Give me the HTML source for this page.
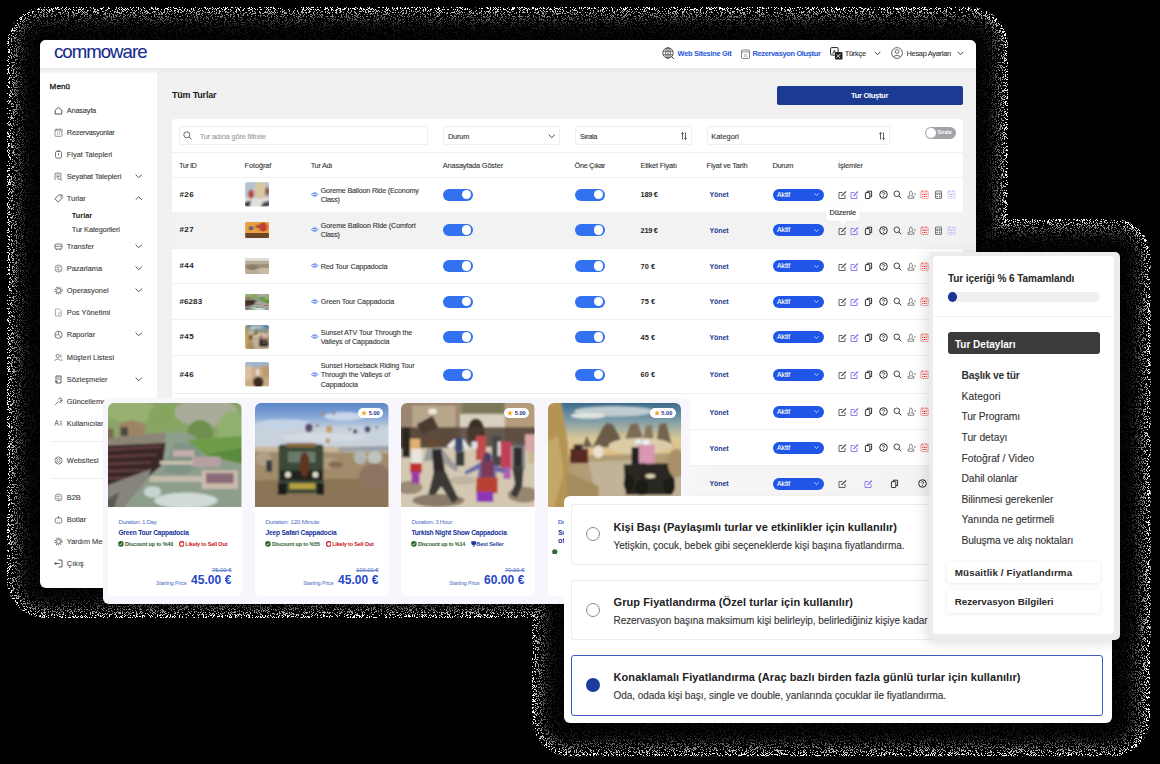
<!DOCTYPE html><html><head><meta charset="utf-8"><style>
html,body{margin:0;padding:0;}
body{width:1160px;height:764px;background:#000;position:relative;overflow:hidden;font-family:"Liberation Sans",sans-serif;}
.t{position:absolute;white-space:nowrap;}
.r{position:absolute;}
</style></head><body>
<svg class="r" style="left:0;top:0" width="1160" height="764"><defs><filter id="nz1" color-interpolation-filters="sRGB" x="0" y="0" width="1160" height="764" filterUnits="userSpaceOnUse"><feTurbulence type="fractalNoise" baseFrequency="1.37" numOctaves="2" seed="4" result="t"/><feColorMatrix in="t" type="matrix" values="0 0 0 0 1  0 0 0 0 1  0 0 0 0 1  60 0 0 0 -33.6" result="m"/><feComposite in="SourceGraphic" in2="m" operator="in"/></filter></defs><g filter="url(#nz1)"><g fill="rgb(255,255,255)"><rect x="7" y="7" width="1001" height="611" rx="38"/><rect x="896.6" y="219" width="254" height="452.5" rx="37"/><rect x="532" y="464.3" width="618" height="292" rx="38"/></g><g fill="rgb(186,186,186)"><rect x="10.3" y="10.3" width="994.5" height="604.7" rx="34.8"/><rect x="899.8" y="222.3" width="247.7" height="446" rx="33.8"/><rect x="535.2" y="467.5" width="611" height="285.5" rx="34.8"/></g><g fill="rgb(131,131,131)"><rect x="13.6" y="13.6" width="988" height="598.4" rx="31.6"/><rect x="903" y="225.6" width="241.4" height="439.5" rx="30.6"/><rect x="538.4" y="470.7" width="604" height="279" rx="31.6"/></g><g fill="rgb(90,90,90)"><rect x="16.9" y="16.9" width="981.5" height="592.1" rx="28.4"/><rect x="906.2" y="228.9" width="235.1" height="433" rx="27.4"/><rect x="541.6" y="473.9" width="597" height="272.5" rx="28.4"/></g><g fill="rgb(60,60,60)"><rect x="20.2" y="20.2" width="975" height="585.8" rx="25.2"/><rect x="909.4" y="232.2" width="228.8" height="426.5" rx="24.2"/><rect x="544.8" y="477.1" width="590" height="266" rx="25.2"/></g><g fill="rgb(39,39,39)"><rect x="23.5" y="23.5" width="968.5" height="579.5" rx="22"/><rect x="912.6" y="235.5" width="222.5" height="420" rx="21"/><rect x="548" y="480.3" width="583" height="259.5" rx="22"/></g><g fill="rgb(26,26,26)"><rect x="26.8" y="26.8" width="962" height="573.2" rx="18.8"/><rect x="915.8" y="238.8" width="216.2" height="413.5" rx="17.8"/><rect x="551.2" y="483.5" width="576" height="253" rx="18.8"/></g><g fill="rgb(18,18,18)"><rect x="30.1" y="30.1" width="955.5" height="566.9" rx="15.6"/><rect x="919" y="242.1" width="209.9" height="407" rx="14.6"/><rect x="554.4" y="486.7" width="569" height="246.5" rx="15.6"/></g><g fill="rgb(14,14,14)"><rect x="33.4" y="33.4" width="949" height="560.6" rx="12.4"/><rect x="922.2" y="245.4" width="203.6" height="400.5" rx="11.4"/><rect x="557.6" y="489.9" width="562" height="240" rx="12.4"/></g><g fill="rgb(13,13,13)"><rect x="36.7" y="36.7" width="942.5" height="554.3" rx="9.2"/><rect x="925.4" y="248.7" width="197.3" height="394" rx="8.2"/><rect x="560.8" y="493.1" width="555" height="233.5" rx="9.2"/></g></g></svg><div class="r" style="left:40.00px;top:40.00px;width:936.00px;height:548.00px;background:#fff;border-radius:6px;"></div><div class="r" style="left:40.00px;top:40.00px;width:936.00px;height:28.00px;background:#fff;border-radius:6px 6px 0 0;"></div><div class="r" style="left:157.00px;top:68.00px;width:819.00px;height:520.00px;background:#f1f1f1;"></div><div class="r" style="left:40.00px;top:68.00px;width:936.00px;height:6.00px;background:linear-gradient(#e9e9e9,rgba(241,241,241,0));"></div><div class="r" style="left:40.00px;top:68.00px;width:117.00px;height:6.00px;background:linear-gradient(#ededed,rgba(255,255,255,0));"></div><div id="t0" class="t" style="left:54.00px;top:39.81px;font-size:18.60px;line-height:24.18px;font-weight:400;color:#172b8c;letter-spacing:-0.971px;-webkit-text-stroke:0.10px #172b8c;">commoware</div><div id="t1" class="t" style="left:677.60px;top:49.21px;font-size:7.40px;line-height:9.62px;font-weight:700;color:#2557d6;letter-spacing:-0.266px;">Web Sitesine Git</div><div id="t2" class="t" style="left:752.50px;top:49.21px;font-size:7.40px;line-height:9.62px;font-weight:700;color:#2557d6;letter-spacing:-0.313px;">Rezervasyon Oluştur</div><div id="t3" class="t" style="left:844.80px;top:49.21px;font-size:7.40px;line-height:9.62px;font-weight:400;color:#333;letter-spacing:-0.279px;-webkit-text-stroke:0.10px #333;">Türkçe</div><div id="t4" class="t" style="left:906.50px;top:49.21px;font-size:7.40px;line-height:9.62px;font-weight:400;color:#333;letter-spacing:-0.280px;-webkit-text-stroke:0.10px #333;">Hesap Ayarları</div><svg class="r" style="left:662.00px;top:47.00px;" width="13" height="13" viewBox="0 0 13 13"><circle cx="6" cy="6" r="5.2" fill="none" stroke="#444" stroke-width="0.9"/><ellipse cx="6" cy="6" rx="2.3" ry="5.2" fill="none" stroke="#444" stroke-width="0.8"/><path d="M1 4.2H11M1 7.8H11M6 .8V11.2" stroke="#444" stroke-width="0.8"/><path d="M9 9L12 12" stroke="#444" stroke-width="1"/></svg><svg class="r" style="left:741.00px;top:49.00px;" width="9" height="10" viewBox="0 0 9 10"><rect x="0.5" y="1" width="8" height="8.5" rx="0.8" fill="none" stroke="#666" stroke-width="0.8"/><path d="M0.5 3H8.5" stroke="#666" stroke-width="0.7"/><text x="4.5" y="8" font-size="3.5" text-anchor="middle" fill="#666" font-family="Liberation Sans">15</text></svg><svg class="r" style="left:830.00px;top:47.00px;" width="13" height="13" viewBox="0 0 13 13"><rect x="0.6" y="0.6" width="7.5" height="7.5" rx="1" fill="#fff" stroke="#222" stroke-width="1"/><text x="4.3" y="6.5" font-size="5.5" font-weight="700" text-anchor="middle" fill="#222" font-family="Liberation Sans">A</text><rect x="5" y="5" width="7.5" height="7.5" rx="1" fill="#222"/><path d="M6.5 10.5L10.5 7M7 7.5L10 11" stroke="#fff" stroke-width="0.8"/></svg><svg class="r" style="left:874.00px;top:51.00px;" width="7" height="5" viewBox="0 0 7 5"><path d="M0.7 0.8L3.5 3.8L6.3 0.8" fill="none" stroke="#333" stroke-width="0.9"/></svg><svg class="r" style="left:891.00px;top:47.00px;" width="12" height="12" viewBox="0 0 12 12"><circle cx="6" cy="6" r="5.4" fill="none" stroke="#444" stroke-width="0.8"/><circle cx="6" cy="4.6" r="1.9" fill="none" stroke="#444" stroke-width="0.8"/><path d="M2.5 10C3.5 8 8.5 8 9.5 10" fill="none" stroke="#444" stroke-width="0.8"/></svg><svg class="r" style="left:957.00px;top:50.50px;" width="7" height="5" viewBox="0 0 7 5"><path d="M0.7 0.8L3.5 3.8L6.3 0.8" fill="none" stroke="#333" stroke-width="0.9"/></svg><div id="t5" class="t" style="left:49.60px;top:81.76px;font-size:8.00px;line-height:10.40px;font-weight:400;color:#1b1b1b;letter-spacing:0.128px;-webkit-text-stroke:0.10px #1b1b1b;-webkit-text-stroke:0.3px #1b1b1b;">Menü</div><div id="t6" class="t" style="left:66.80px;top:105.81px;font-size:7.40px;line-height:9.62px;font-weight:400;color:#3a3a3a;letter-spacing:-0.218px;-webkit-text-stroke:0.10px #3a3a3a;">Anasayfa</div><svg class="r" style="left:53.60px;top:105.60px;" width="9" height="9" viewBox="0 0 9 9"><path d="M1.2 4.3L4.5 1.2L7.8 4.3V8H1.2Z" fill="none" stroke="#333" stroke-width="0.85" stroke-linejoin="round"/></svg><div id="t7" class="t" style="left:66.80px;top:127.81px;font-size:7.40px;line-height:9.62px;font-weight:400;color:#3a3a3a;letter-spacing:-0.258px;-webkit-text-stroke:0.10px #3a3a3a;">Rezervasyonlar</div><svg class="r" style="left:53.60px;top:127.60px;" width="9" height="9" viewBox="0 0 9 9"><rect x="1" y="1.3" width="7" height="7" rx="0.6" fill="none" stroke="#666" stroke-width="0.7"/><path d="M1 2.8H8M2.8 0.6V1.8M6.2 0.6V1.8" stroke="#666" stroke-width="0.6"/><path d="M3.5 4.4V7M5 4.4H5.9L5 7" fill="none" stroke="#666" stroke-width="0.45"/></svg><div id="t8" class="t" style="left:66.80px;top:149.81px;font-size:7.40px;line-height:9.62px;font-weight:400;color:#3a3a3a;-webkit-text-stroke:0.10px #3a3a3a;">Fiyat Talepleri</div><svg class="r" style="left:53.60px;top:149.60px;" width="9" height="9" viewBox="0 0 9 9"><rect x="1.5" y="1.5" width="6" height="6.5" rx="1.2" fill="none" stroke="#555" stroke-width="0.8"/><path d="M4.5 3V5.2" stroke="#555" stroke-width="0.8"/><path d="M3 1.5V0.8H6V1.5" fill="none" stroke="#555" stroke-width="0.6"/></svg><div id="t9" class="t" style="left:66.80px;top:171.71px;font-size:7.40px;line-height:9.62px;font-weight:400;color:#3a3a3a;letter-spacing:-0.129px;-webkit-text-stroke:0.10px #3a3a3a;">Seyahat Talepleri</div><svg class="r" style="left:53.60px;top:171.50px;" width="9" height="9" viewBox="0 0 9 9"><path d="M1 8V1.5L4 0.8L7 1.5V4" fill="none" stroke="#555" stroke-width="0.7"/><path d="M2.3 3H5.5M2.3 4.6H4" stroke="#555" stroke-width="0.6"/><circle cx="5.3" cy="5.8" r="1.7" fill="none" stroke="#555" stroke-width="0.7"/><path d="M6.5 7L8.3 8.6" stroke="#555" stroke-width="0.8"/></svg><svg class="r" style="left:135.30px;top:173.80px;" width="7.5" height="4.5" viewBox="0 0 7.5 4.5"><path d="M0.6 0.6L3.75 3.7L6.9 0.6" fill="none" stroke="#444" stroke-width="0.9"/></svg><div id="t10" class="t" style="left:66.80px;top:193.71px;font-size:7.40px;line-height:9.62px;font-weight:400;color:#3a3a3a;-webkit-text-stroke:0.10px #3a3a3a;">Turlar</div><svg class="r" style="left:53.60px;top:193.50px;" width="9" height="9" viewBox="0 0 9 9"><path d="M4.8 0.9H8.1V4.2L4.2 8.1L0.9 4.8Z" fill="none" stroke="#444" stroke-width="0.8" stroke-linejoin="round"/><circle cx="6.3" cy="2.7" r="0.55" fill="#444"/></svg><svg class="r" style="left:135.30px;top:195.80px;" width="7.5" height="4.5" viewBox="0 0 7.5 4.5"><path d="M0.6 3.9L3.75 0.8L6.9 3.9" fill="none" stroke="#444" stroke-width="0.9"/></svg><div id="t11" class="t" style="left:66.80px;top:241.91px;font-size:7.40px;line-height:9.62px;font-weight:400;color:#3a3a3a;-webkit-text-stroke:0.10px #3a3a3a;">Transfer</div><svg class="r" style="left:53.60px;top:241.70px;" width="9" height="9" viewBox="0 0 9 9"><rect x="1" y="2" width="7" height="5" rx="1" fill="none" stroke="#555" stroke-width="0.8"/><path d="M1 4.3H8M2.5 7V8.2M6.5 7V8.2" stroke="#555" stroke-width="0.7"/></svg><svg class="r" style="left:135.30px;top:244.00px;" width="7.5" height="4.5" viewBox="0 0 7.5 4.5"><path d="M0.6 0.6L3.75 3.7L6.9 0.6" fill="none" stroke="#444" stroke-width="0.9"/></svg><div id="t12" class="t" style="left:66.80px;top:263.91px;font-size:7.40px;line-height:9.62px;font-weight:400;color:#3a3a3a;-webkit-text-stroke:0.10px #3a3a3a;">Pazarlama</div><svg class="r" style="left:53.60px;top:263.70px;" width="9" height="9" viewBox="0 0 9 9"><circle cx="4.5" cy="4.5" r="3.6" fill="none" stroke="#777" stroke-width="0.7"/><path d="M1.3 3.2C3 4.3 6 2.2 7.8 3.5M1.5 6C3.5 4.8 5.5 7 7.6 5.8M4 1C2.8 3 5.5 5.5 4.3 8" fill="none" stroke="#777" stroke-width="0.55"/></svg><svg class="r" style="left:135.30px;top:266.00px;" width="7.5" height="4.5" viewBox="0 0 7.5 4.5"><path d="M0.6 0.6L3.75 3.7L6.9 0.6" fill="none" stroke="#444" stroke-width="0.9"/></svg><div id="t13" class="t" style="left:66.80px;top:286.31px;font-size:7.40px;line-height:9.62px;font-weight:400;color:#3a3a3a;-webkit-text-stroke:0.10px #3a3a3a;">Operasyonel</div><svg class="r" style="left:53.60px;top:286.10px;" width="9" height="9" viewBox="0 0 9 9"><circle cx="4.5" cy="4.5" r="2.1" fill="none" stroke="#555" stroke-width="0.8"/><circle cx="4.5" cy="4.5" r="3.4" fill="none" stroke="#555" stroke-width="1.1" stroke-dasharray="1.1 1.1"/></svg><svg class="r" style="left:135.30px;top:288.40px;" width="7.5" height="4.5" viewBox="0 0 7.5 4.5"><path d="M0.6 0.6L3.75 3.7L6.9 0.6" fill="none" stroke="#444" stroke-width="0.9"/></svg><div id="t14" class="t" style="left:66.80px;top:308.31px;font-size:7.40px;line-height:9.62px;font-weight:400;color:#3a3a3a;-webkit-text-stroke:0.10px #3a3a3a;">Pos Yönetimi</div><svg class="r" style="left:53.60px;top:308.10px;" width="9" height="9" viewBox="0 0 9 9"><path d="M1.5 1H5.5L7 2.5V8H1.5Z" fill="none" stroke="#888" stroke-width="0.7"/><circle cx="6" cy="6.5" r="1.6" fill="#fff" stroke="#888" stroke-width="0.6"/></svg><div id="t15" class="t" style="left:66.80px;top:330.31px;font-size:7.40px;line-height:9.62px;font-weight:400;color:#3a3a3a;-webkit-text-stroke:0.10px #3a3a3a;">Raporlar</div><svg class="r" style="left:53.60px;top:330.10px;" width="9" height="9" viewBox="0 0 9 9"><circle cx="4.5" cy="4.8" r="3.6" fill="none" stroke="#555" stroke-width="0.75"/><path d="M4.5 1.2V4.8L7 7.2M4.5 4.8H1" fill="none" stroke="#555" stroke-width="0.65"/></svg><svg class="r" style="left:135.30px;top:332.40px;" width="7.5" height="4.5" viewBox="0 0 7.5 4.5"><path d="M0.6 0.6L3.75 3.7L6.9 0.6" fill="none" stroke="#444" stroke-width="0.9"/></svg><div id="t16" class="t" style="left:66.80px;top:352.71px;font-size:7.40px;line-height:9.62px;font-weight:400;color:#3a3a3a;-webkit-text-stroke:0.10px #3a3a3a;">Müşteri Listesi</div><svg class="r" style="left:53.60px;top:352.50px;" width="9" height="9" viewBox="0 0 9 9"><circle cx="3.6" cy="3" r="1.6" fill="none" stroke="#555" stroke-width="0.7"/><path d="M0.8 8C0.8 5.6 6.4 5.6 6.4 8" fill="none" stroke="#555" stroke-width="0.7"/><path d="M5.8 1.5C7.5 1.7 7.5 4.2 5.9 4.4M7 5.8C8 6.3 8.3 7 8.3 8" fill="none" stroke="#555" stroke-width="0.6"/></svg><div id="t17" class="t" style="left:66.80px;top:374.71px;font-size:7.40px;line-height:9.62px;font-weight:400;color:#3a3a3a;-webkit-text-stroke:0.10px #3a3a3a;">Sözleşmeler</div><svg class="r" style="left:53.60px;top:374.50px;" width="9" height="9" viewBox="0 0 9 9"><path d="M2 1H7V8H2Z" fill="none" stroke="#444" stroke-width="0.85"/><path d="M3.2 2.8H5.8M3.2 4.4H5.8M1 6.5H4" stroke="#444" stroke-width="0.6"/></svg><svg class="r" style="left:135.30px;top:376.80px;" width="7.5" height="4.5" viewBox="0 0 7.5 4.5"><path d="M0.6 0.6L3.75 3.7L6.9 0.6" fill="none" stroke="#444" stroke-width="0.9"/></svg><div id="t18" class="t" style="left:66.80px;top:396.71px;font-size:7.40px;line-height:9.62px;font-weight:400;color:#3a3a3a;-webkit-text-stroke:0.10px #3a3a3a;">Güncellemeler</div><svg class="r" style="left:53.60px;top:396.50px;" width="9" height="9" viewBox="0 0 9 9"><path d="M1.2 7.8L4.4 4.6M4.2 2.5C4.7 1 6.8 0.6 7.8 1.9L6.4 3.1L6.9 4L8.1 3.3C8.1 5 6.3 5.8 5 5.1" fill="none" stroke="#555" stroke-width="0.8"/></svg><div id="t19" class="t" style="left:66.80px;top:418.61px;font-size:7.40px;line-height:9.62px;font-weight:400;color:#3a3a3a;-webkit-text-stroke:0.10px #3a3a3a;">Kullanıcılar</div><svg class="r" style="left:53.60px;top:418.40px;" width="9" height="9" viewBox="0 0 9 9"><path d="M0.8 7.5L2.6 2L4.4 7.5M1.5 5.6H3.7" fill="none" stroke="#555" stroke-width="0.7"/><path d="M5.5 3.5H8.3M5.5 5.2H8.3M5.5 6.9H8.3" stroke="#555" stroke-width="0.6"/></svg><div id="t20" class="t" style="left:66.80px;top:455.91px;font-size:7.40px;line-height:9.62px;font-weight:400;color:#3a3a3a;-webkit-text-stroke:0.10px #3a3a3a;">Websitesi</div><svg class="r" style="left:53.60px;top:455.70px;" width="9" height="9" viewBox="0 0 9 9"><circle cx="4.5" cy="4.5" r="3.6" fill="none" stroke="#666" stroke-width="0.75"/><circle cx="4.5" cy="4.5" r="1.6" fill="none" stroke="#666" stroke-width="0.7"/><path d="M2 2L3.3 3.3M7 2L5.7 3.3M2 7L3.3 5.7M7 7L5.7 5.7" stroke="#666" stroke-width="0.6"/></svg><div id="t21" class="t" style="left:66.80px;top:493.21px;font-size:7.40px;line-height:9.62px;font-weight:400;color:#3a3a3a;-webkit-text-stroke:0.10px #3a3a3a;">B2B</div><svg class="r" style="left:53.60px;top:493.00px;" width="9" height="9" viewBox="0 0 9 9"><circle cx="4.5" cy="4.5" r="3.6" fill="none" stroke="#777" stroke-width="0.7"/><path d="M1.3 3.2C3 4.3 6 2.2 7.8 3.5M1.5 6C3.5 4.8 5.5 7 7.6 5.8M4 1C2.8 3 5.5 5.5 4.3 8" fill="none" stroke="#777" stroke-width="0.55"/></svg><div id="t22" class="t" style="left:66.80px;top:515.21px;font-size:7.40px;line-height:9.62px;font-weight:400;color:#3a3a3a;-webkit-text-stroke:0.10px #3a3a3a;">Botlar</div><svg class="r" style="left:53.60px;top:515.00px;" width="9" height="9" viewBox="0 0 9 9"><rect x="1.2" y="3" width="6.6" height="5" rx="1.5" fill="none" stroke="#555" stroke-width="0.75"/><path d="M4.5 1V3M3 5.3H3.3M5.7 5.3H6" stroke="#555" stroke-width="0.8"/></svg><div id="t23" class="t" style="left:66.80px;top:537.21px;font-size:7.40px;line-height:9.62px;font-weight:400;color:#3a3a3a;-webkit-text-stroke:0.10px #3a3a3a;">Yardım Merkezi</div><svg class="r" style="left:53.60px;top:537.00px;" width="9" height="9" viewBox="0 0 9 9"><circle cx="4.5" cy="4.5" r="2.1" fill="none" stroke="#555" stroke-width="0.8"/><circle cx="4.5" cy="4.5" r="3.4" fill="none" stroke="#555" stroke-width="1.1" stroke-dasharray="1.1 1.1"/></svg><div id="t24" class="t" style="left:66.80px;top:559.11px;font-size:7.40px;line-height:9.62px;font-weight:400;color:#3a3a3a;-webkit-text-stroke:0.10px #3a3a3a;">Çıkış</div><svg class="r" style="left:53.60px;top:558.90px;" width="9" height="9" viewBox="0 0 9 9"><path d="M4.5 1H8V8H4.5" fill="none" stroke="#333" stroke-width="0.8"/><path d="M0.8 4.5H5.8M2.4 2.9L0.8 4.5L2.4 6.1" fill="none" stroke="#333" stroke-width="0.8"/></svg><div id="t25" class="t" style="left:71.80px;top:210.71px;font-size:7.40px;line-height:9.62px;font-weight:700;color:#222;">Turlar</div><div id="t26" class="t" style="left:71.80px;top:224.71px;font-size:7.40px;line-height:9.62px;font-weight:400;color:#3a3a3a;letter-spacing:-0.137px;-webkit-text-stroke:0.10px #3a3a3a;">Tur Kategorileri</div><div class="r" style="left:50.00px;top:440.50px;width:100.00px;height:1.00px;background:#eee;"></div><div class="r" style="left:50.00px;top:477.90px;width:100.00px;height:1.00px;background:#eee;"></div><div id="t27" class="t" style="left:172.00px;top:89.78px;font-size:9.00px;line-height:11.70px;font-weight:700;color:#1a1a1a;letter-spacing:-0.205px;">Tüm Turlar</div><div class="r" style="left:776.60px;top:85.50px;width:186.50px;height:19.00px;background:#1b3b93;border-radius:2px;"></div><div id="t28" class="t" style="left:851.00px;top:91.15px;font-size:7.50px;line-height:9.75px;font-weight:700;color:#fff;letter-spacing:-0.298px;">Tur Oluştur</div><div class="r" style="left:172.00px;top:119.00px;width:791.00px;height:470.00px;background:#fff;border-radius:3px 3px 0 0;"></div><div class="r" style="left:179.40px;top:126.30px;width:249.00px;height:18.50px;border:1px solid #eeeeee;border-radius:2px;box-sizing:border-box;"></div><svg class="r" style="left:183.30px;top:131.00px;" width="9" height="9" viewBox="0 0 9 9"><circle cx="3.8" cy="3.8" r="3" fill="none" stroke="#555" stroke-width="0.9"/><path d="M6 6L8.5 8.5" stroke="#555" stroke-width="0.9"/></svg><div id="t29" class="t" style="left:199.70px;top:131.61px;font-size:7.40px;line-height:9.62px;font-weight:400;color:#9a9a9a;letter-spacing:-0.158px;-webkit-text-stroke:0.10px #9a9a9a;">Tur adına göre filtrele</div><div class="r" style="left:442.80px;top:126.30px;width:117.50px;height:18.50px;border:1px solid #eeeeee;border-radius:2px;box-sizing:border-box;"></div><div id="t30" class="t" style="left:448.00px;top:131.61px;font-size:7.40px;line-height:9.62px;font-weight:400;color:#333;letter-spacing:-0.222px;-webkit-text-stroke:0.10px #333;">Durum</div><svg class="r" style="left:548.00px;top:133.50px;" width="7.5" height="4.5" viewBox="0 0 7.5 4.5"><path d="M0.6 0.6L3.75 3.7L6.9 0.6" fill="none" stroke="#333" stroke-width="0.9"/></svg><div class="r" style="left:574.50px;top:126.30px;width:117.00px;height:18.80px;border:1px solid #eeeeee;border-radius:2px;box-sizing:border-box;"></div><div id="t31" class="t" style="left:579.90px;top:131.71px;font-size:7.40px;line-height:9.62px;font-weight:400;color:#333;letter-spacing:-0.383px;-webkit-text-stroke:0.10px #333;">Sırala</div><div class="r" style="left:706.60px;top:126.30px;width:183.00px;height:18.80px;border:1px solid #eeeeee;border-radius:2px;box-sizing:border-box;"></div><div id="t32" class="t" style="left:711.30px;top:131.71px;font-size:7.40px;line-height:9.62px;font-weight:400;color:#333;letter-spacing:0.010px;-webkit-text-stroke:0.10px #333;">Kategori</div><svg class="r" style="left:681.30px;top:131.50px;" width="6" height="8" viewBox="0 0 6 8"><path d="M1.5 0.5V7.5M0.3 1.8L1.5 0.5L2.7 1.8M4.5 0.5V7.5M3.3 6.2L4.5 7.5L5.7 6.2" fill="none" stroke="#333" stroke-width="0.8"/></svg><svg class="r" style="left:878.80px;top:131.50px;" width="6" height="8" viewBox="0 0 6 8"><path d="M1.5 0.5V7.5M0.3 1.8L1.5 0.5L2.7 1.8M4.5 0.5V7.5M3.3 6.2L4.5 7.5L5.7 6.2" fill="none" stroke="#333" stroke-width="0.8"/></svg><div class="r" style="left:925.00px;top:126.50px;width:31.00px;height:12.00px;background:#a3a3aa;border-radius:6px;"></div><div class="r" style="left:926.00px;top:127.50px;width:10.00px;height:10.00px;background:#fff;border-radius:50%;"></div><div id="t33" class="t" style="left:937.50px;top:129.40px;font-size:5.00px;line-height:6.50px;font-weight:700;color:#fff;letter-spacing:0.075px;">Sırala</div><div class="r" style="left:172.00px;top:152.00px;width:791.00px;height:1.00px;background:#f1f1f1;"></div><div id="t34" class="t" style="left:179.00px;top:160.51px;font-size:7.40px;line-height:9.62px;font-weight:400;color:#333;letter-spacing:-0.473px;-webkit-text-stroke:0.10px #333;">Tur ID</div><div id="t35" class="t" style="left:244.50px;top:160.51px;font-size:7.40px;line-height:9.62px;font-weight:400;color:#333;letter-spacing:-0.090px;-webkit-text-stroke:0.10px #333;">Fotoğraf</div><div id="t36" class="t" style="left:310.70px;top:160.51px;font-size:7.40px;line-height:9.62px;font-weight:400;color:#333;letter-spacing:-0.310px;-webkit-text-stroke:0.10px #333;">Tur Adı</div><div id="t37" class="t" style="left:442.80px;top:160.51px;font-size:7.40px;line-height:9.62px;font-weight:400;color:#333;letter-spacing:-0.186px;-webkit-text-stroke:0.10px #333;">Anasayfada Göster</div><div id="t38" class="t" style="left:574.50px;top:160.51px;font-size:7.40px;line-height:9.62px;font-weight:400;color:#333;letter-spacing:-0.361px;-webkit-text-stroke:0.10px #333;">Öne Çıkar</div><div id="t39" class="t" style="left:640.40px;top:160.51px;font-size:7.40px;line-height:9.62px;font-weight:400;color:#333;letter-spacing:-0.167px;-webkit-text-stroke:0.10px #333;">Etiket Fiyatı</div><div id="t40" class="t" style="left:706.60px;top:160.51px;font-size:7.40px;line-height:9.62px;font-weight:400;color:#333;letter-spacing:-0.224px;-webkit-text-stroke:0.10px #333;">Fiyat ve Tarih</div><div id="t41" class="t" style="left:772.50px;top:160.51px;font-size:7.40px;line-height:9.62px;font-weight:400;color:#333;letter-spacing:-0.297px;-webkit-text-stroke:0.10px #333;">Durum</div><div id="t42" class="t" style="left:838.00px;top:160.51px;font-size:7.40px;line-height:9.62px;font-weight:400;color:#333;letter-spacing:-0.125px;-webkit-text-stroke:0.10px #333;">İşlemler</div><div class="r" style="left:172.00px;top:176.50px;width:791.00px;height:1.00px;background:#f1f1f1;"></div><div class="r" style="left:172.00px;top:211.50px;width:791.00px;height:1.00px;background:#f0f0f0;"></div><div id="t43" class="t" style="left:179.40px;top:189.86px;font-size:8.00px;line-height:10.40px;font-weight:700;color:#1f1f1f;letter-spacing:0.470px;">#26</div><div class="r" style="left:244.9px;top:182.20px;width:24.6px;height:24.6px;border-radius:2px;overflow:hidden"><svg class="r" style="left:0.00px;top:0.00px;position:absolute" width="24.6" height="24.6" viewBox="22 22 923 723" preserveAspectRatio="none"><defs><filter id="bth26" x="-5%" y="-5%" width="110%" height="110%"><feGaussianBlur stdDeviation="30"/></filter><clipPath id="cth26"><rect x="22" y="22" width="923" height="723"/></clipPath></defs><g clip-path="url(#cth26)"><g filter="url(#bth26)"><rect x="0" y="0" width="972" height="764" fill="#b4c4d4"/><rect x="0" y="480" width="972" height="300" fill="#e4e0dc"/><ellipse cx="600" cy="260" rx="230" ry="260" fill="#d8c8a0"/><ellipse cx="250" cy="380" rx="110" ry="130" fill="#b84040"/><ellipse cx="860" cy="300" rx="90" ry="120" fill="#8a5a40"/><polygon points="0,620 250,560 200,764 0,764" fill="#3a3a48"/><polygon points="700,620 972,560 972,764 600,764" fill="#4a4a58"/></g></g></svg></div><div id="t44" class="t" style="left:320.70px;top:185.67px;font-size:7.20px;line-height:9.36px;font-weight:400;color:#333;letter-spacing:-0.181px;-webkit-text-stroke:0.10px #333;">Goreme Balloon Ride (Economy</div><div id="t45" class="t" style="left:320.70px;top:194.97px;font-size:7.20px;line-height:9.36px;font-weight:400;color:#333;letter-spacing:-0.215px;-webkit-text-stroke:0.10px #333;">Class)</div><svg class="r" style="left:311.00px;top:191.90px;" width="7.5" height="5" viewBox="0 0 7.5 5"><path d="M0.5 2.5C2 0.3 5.5 0.3 7 2.5C5.5 4.7 2 4.7 0.5 2.5Z" fill="none" stroke="#3a6ae8" stroke-width="0.8"/><circle cx="3.75" cy="2.5" r="1.1" fill="none" stroke="#3a6ae8" stroke-width="0.7"/></svg><div class="r" style="left:442.80px;top:188.50px;width:30.50px;height:12.20px;background:#3271ef;border-radius:6.1px;"></div><div class="r" style="left:461.80px;top:189.90px;width:9.60px;height:9.60px;background:#fff;border-radius:50%;"></div><div class="r" style="left:574.80px;top:188.50px;width:30.50px;height:12.20px;background:#3271ef;border-radius:6.1px;"></div><div class="r" style="left:593.80px;top:189.90px;width:9.60px;height:9.60px;background:#fff;border-radius:50%;"></div><div id="t46" class="t" style="left:640.60px;top:190.21px;font-size:7.40px;line-height:9.62px;font-weight:700;color:#1f1f1f;letter-spacing:-0.300px;">189 €</div><div id="t47" class="t" style="left:709.50px;top:190.44px;font-size:7.00px;line-height:9.10px;font-weight:700;color:#1b3a8f;letter-spacing:-0.063px;">Yönet</div><div class="r" style="left:773.00px;top:188.50px;width:51.00px;height:12.20px;background:#1f56e8;border-radius:6.1px;"></div><div id="t48" class="t" style="left:777.00px;top:190.56px;font-size:6.80px;line-height:8.84px;font-weight:400;color:#fff;-webkit-text-stroke:0.10px #fff;">Aktif</div><svg class="r" style="left:814.00px;top:193.00px;" width="5" height="3" viewBox="0 0 5 3"><path d="M0.4 0.4L2.5 2.5L4.6 0.4" fill="none" stroke="#fff" stroke-width="0.7"/></svg><svg class="r" style="left:837.70px;top:190.00px;" width="9" height="9" viewBox="0 0 9 9"><path d="M1 2.5H4.5M1 2.5V8.5H7V5" fill="none" stroke="#555" stroke-width="0.9"/><path d="M3.5 6L8 1.5" stroke="#555" stroke-width="1.2"/></svg><svg class="r" style="left:850.30px;top:190.00px;" width="9" height="9" viewBox="0 0 9 9"><path d="M1 2.5H4.5M1 2.5V8.5H7V5" fill="none" stroke="#8a70f0" stroke-width="0.9"/><path d="M3.5 6L8 1.5" stroke="#8a70f0" stroke-width="1.2"/></svg><svg class="r" style="left:863.90px;top:190.00px;" width="9" height="9" viewBox="0 0 9 9"><rect x="1.4" y="2.6" width="4.4" height="5.9" rx="0.6" fill="none" stroke="#111" stroke-width="0.85"/><path d="M3.4 2.4V1.2H7.6V6.6H5.9" fill="none" stroke="#111" stroke-width="0.85" stroke-linejoin="round"/></svg><svg class="r" style="left:878.50px;top:190.00px;" width="9" height="9" viewBox="0 0 9 9"><circle cx="4.5" cy="4.5" r="3.8" fill="none" stroke="#111" stroke-width="0.9"/><path d="M3.3 3.5C3.3 2.3 5.7 2.3 5.7 3.5C5.7 4.4 4.5 4.4 4.5 5.3" fill="none" stroke="#111" stroke-width="0.8"/><circle cx="4.5" cy="6.6" r="0.5" fill="#111"/></svg><svg class="r" style="left:892.80px;top:190.00px;" width="9" height="9" viewBox="0 0 9 9"><circle cx="3.8" cy="3.8" r="2.8" fill="none" stroke="#333" stroke-width="0.9"/><path d="M5.8 5.8L8.3 8.3" stroke="#333" stroke-width="1"/></svg><svg class="r" style="left:906.50px;top:190.00px;" width="9" height="9" viewBox="0 0 9 9"><path d="M3 5.5C2 4.8 2.2 1 3.9 1C5.6 1 5.8 4.8 4.8 5.5V6.2H6.8V8.3H1V6.2H3Z" fill="none" stroke="#555" stroke-width="0.7" stroke-linejoin="round"/><circle cx="8" cy="4" r="0.7" fill="#555"/></svg><svg class="r" style="left:919.50px;top:190.00px;" width="9" height="9" viewBox="0 0 9 9"><rect x="0.9" y="1.2" width="7.2" height="7.4" rx="0.8" fill="none" stroke="#f03030" stroke-width="0.65" stroke-dasharray="1.1 0.45"/><path d="M0.9 3H8.1" stroke="#f03030" stroke-width="0.5" stroke-dasharray="0.7 0.4"/><path d="M2.6 0.5V1.8M6.4 0.5V1.8" stroke="#f03030" stroke-width="0.6"/><g fill="#ee1c1c"><rect x="2.4" y="4" width="1" height="1"/><rect x="4" y="4" width="1" height="1"/><rect x="5.6" y="4" width="1" height="1"/><rect x="2.4" y="6" width="1" height="1"/><rect x="4" y="6" width="1" height="1"/><rect x="5.6" y="6" width="1" height="1"/></g></svg><svg class="r" style="left:933.50px;top:190.00px;" width="9" height="9" viewBox="0 0 9 9"><rect x="1.5" y="1" width="6" height="7.4" rx="0.4" fill="none" stroke="#555" stroke-width="0.8"/><path d="M1.5 3.2H7.5" stroke="#555" stroke-width="0.7"/><g fill="#555"><rect x="2.5" y="4.1" width="1.4" height="1"/><rect x="5" y="4.1" width="1.4" height="1"/><rect x="2.5" y="6.2" width="1.4" height="1"/><rect x="5" y="6.2" width="1.4" height="1"/></g></svg><svg class="r" style="left:947.10px;top:190.00px;" width="9" height="9" viewBox="0 0 9 9"><rect x="0.9" y="1.2" width="7.2" height="7.4" rx="0.8" fill="none" stroke="#a8a2f2" stroke-width="0.65" stroke-dasharray="1.1 0.45"/><path d="M0.9 3H8.1" stroke="#a8a2f2" stroke-width="0.5" stroke-dasharray="0.7 0.4"/><path d="M2.6 0.5V1.8M6.4 0.5V1.8" stroke="#a8a2f2" stroke-width="0.6"/><g fill="#a8a2f2"><rect x="2.4" y="4" width="1" height="1"/><rect x="4" y="4" width="1" height="1"/><rect x="5.6" y="4" width="1" height="1"/><rect x="2.4" y="6" width="1" height="1"/><rect x="4" y="6" width="1" height="1"/><rect x="5.6" y="6" width="1" height="1"/></g></svg><div class="r" style="left:172.00px;top:212.00px;width:791.00px;height:36.00px;background:#f2f2f2;"></div><div class="r" style="left:172.00px;top:247.50px;width:791.00px;height:1.00px;background:#f0f0f0;"></div><div id="t49" class="t" style="left:179.40px;top:225.36px;font-size:8.00px;line-height:10.40px;font-weight:700;color:#1f1f1f;letter-spacing:0.470px;">#27</div><div class="r" style="left:244.9px;top:222.00px;width:24.6px;height:16px;border-radius:1px;overflow:hidden"><svg class="r" style="left:0.00px;top:0.00px;position:absolute" width="24.6" height="16" viewBox="22 22 923 723" preserveAspectRatio="none"><defs><filter id="bth27" x="-5%" y="-5%" width="110%" height="110%"><feGaussianBlur stdDeviation="30"/></filter><clipPath id="cth27"><rect x="22" y="22" width="923" height="723"/></clipPath></defs><g clip-path="url(#cth27)"><g filter="url(#bth27)"><rect x="0" y="0" width="972" height="764" fill="#eaa040"/><ellipse cx="700" cy="250" rx="170" ry="200" fill="#c04030"/><ellipse cx="250" cy="300" rx="80" ry="100" fill="#405080"/><ellipse cx="480" cy="220" rx="60" ry="80" fill="#a05030"/><rect x="0" y="520" width="972" height="250" fill="#6a4428"/></g></g></svg></div><div id="t50" class="t" style="left:320.70px;top:221.17px;font-size:7.20px;line-height:9.36px;font-weight:400;color:#333;letter-spacing:-0.129px;-webkit-text-stroke:0.10px #333;">Goreme Balloon Ride (Comfort</div><div id="t51" class="t" style="left:320.70px;top:230.47px;font-size:7.20px;line-height:9.36px;font-weight:400;color:#333;letter-spacing:-0.215px;-webkit-text-stroke:0.10px #333;">Class)</div><svg class="r" style="left:311.00px;top:227.40px;" width="7.5" height="5" viewBox="0 0 7.5 5"><path d="M0.5 2.5C2 0.3 5.5 0.3 7 2.5C5.5 4.7 2 4.7 0.5 2.5Z" fill="none" stroke="#3a6ae8" stroke-width="0.8"/><circle cx="3.75" cy="2.5" r="1.1" fill="none" stroke="#3a6ae8" stroke-width="0.7"/></svg><div class="r" style="left:442.80px;top:224.00px;width:30.50px;height:12.20px;background:#3271ef;border-radius:6.1px;"></div><div class="r" style="left:461.80px;top:225.40px;width:9.60px;height:9.60px;background:#fff;border-radius:50%;"></div><div class="r" style="left:574.80px;top:224.00px;width:30.50px;height:12.20px;background:#3271ef;border-radius:6.1px;"></div><div class="r" style="left:593.80px;top:225.40px;width:9.60px;height:9.60px;background:#fff;border-radius:50%;"></div><div id="t52" class="t" style="left:640.60px;top:225.71px;font-size:7.40px;line-height:9.62px;font-weight:700;color:#1f1f1f;letter-spacing:-0.300px;">219 €</div><div id="t53" class="t" style="left:709.50px;top:225.94px;font-size:7.00px;line-height:9.10px;font-weight:700;color:#1b3a8f;letter-spacing:-0.063px;">Yönet</div><div class="r" style="left:773.00px;top:224.00px;width:51.00px;height:12.20px;background:#1f56e8;border-radius:6.1px;"></div><div id="t54" class="t" style="left:777.00px;top:226.06px;font-size:6.80px;line-height:8.84px;font-weight:400;color:#fff;-webkit-text-stroke:0.10px #fff;">Aktif</div><svg class="r" style="left:814.00px;top:228.50px;" width="5" height="3" viewBox="0 0 5 3"><path d="M0.4 0.4L2.5 2.5L4.6 0.4" fill="none" stroke="#fff" stroke-width="0.7"/></svg><svg class="r" style="left:837.70px;top:225.50px;" width="9" height="9" viewBox="0 0 9 9"><path d="M1 2.5H4.5M1 2.5V8.5H7V5" fill="none" stroke="#555" stroke-width="0.9"/><path d="M3.5 6L8 1.5" stroke="#555" stroke-width="1.2"/></svg><svg class="r" style="left:850.30px;top:225.50px;" width="9" height="9" viewBox="0 0 9 9"><path d="M1 2.5H4.5M1 2.5V8.5H7V5" fill="none" stroke="#8a70f0" stroke-width="0.9"/><path d="M3.5 6L8 1.5" stroke="#8a70f0" stroke-width="1.2"/></svg><svg class="r" style="left:863.90px;top:225.50px;" width="9" height="9" viewBox="0 0 9 9"><rect x="1.4" y="2.6" width="4.4" height="5.9" rx="0.6" fill="none" stroke="#111" stroke-width="0.85"/><path d="M3.4 2.4V1.2H7.6V6.6H5.9" fill="none" stroke="#111" stroke-width="0.85" stroke-linejoin="round"/></svg><svg class="r" style="left:878.50px;top:225.50px;" width="9" height="9" viewBox="0 0 9 9"><circle cx="4.5" cy="4.5" r="3.8" fill="none" stroke="#111" stroke-width="0.9"/><path d="M3.3 3.5C3.3 2.3 5.7 2.3 5.7 3.5C5.7 4.4 4.5 4.4 4.5 5.3" fill="none" stroke="#111" stroke-width="0.8"/><circle cx="4.5" cy="6.6" r="0.5" fill="#111"/></svg><svg class="r" style="left:892.80px;top:225.50px;" width="9" height="9" viewBox="0 0 9 9"><circle cx="3.8" cy="3.8" r="2.8" fill="none" stroke="#333" stroke-width="0.9"/><path d="M5.8 5.8L8.3 8.3" stroke="#333" stroke-width="1"/></svg><svg class="r" style="left:906.50px;top:225.50px;" width="9" height="9" viewBox="0 0 9 9"><path d="M3 5.5C2 4.8 2.2 1 3.9 1C5.6 1 5.8 4.8 4.8 5.5V6.2H6.8V8.3H1V6.2H3Z" fill="none" stroke="#555" stroke-width="0.7" stroke-linejoin="round"/><circle cx="8" cy="4" r="0.7" fill="#555"/></svg><svg class="r" style="left:919.50px;top:225.50px;" width="9" height="9" viewBox="0 0 9 9"><rect x="0.9" y="1.2" width="7.2" height="7.4" rx="0.8" fill="none" stroke="#f03030" stroke-width="0.65" stroke-dasharray="1.1 0.45"/><path d="M0.9 3H8.1" stroke="#f03030" stroke-width="0.5" stroke-dasharray="0.7 0.4"/><path d="M2.6 0.5V1.8M6.4 0.5V1.8" stroke="#f03030" stroke-width="0.6"/><g fill="#ee1c1c"><rect x="2.4" y="4" width="1" height="1"/><rect x="4" y="4" width="1" height="1"/><rect x="5.6" y="4" width="1" height="1"/><rect x="2.4" y="6" width="1" height="1"/><rect x="4" y="6" width="1" height="1"/><rect x="5.6" y="6" width="1" height="1"/></g></svg><svg class="r" style="left:933.50px;top:225.50px;" width="9" height="9" viewBox="0 0 9 9"><rect x="1.5" y="1" width="6" height="7.4" rx="0.4" fill="none" stroke="#555" stroke-width="0.8"/><path d="M1.5 3.2H7.5" stroke="#555" stroke-width="0.7"/><g fill="#555"><rect x="2.5" y="4.1" width="1.4" height="1"/><rect x="5" y="4.1" width="1.4" height="1"/><rect x="2.5" y="6.2" width="1.4" height="1"/><rect x="5" y="6.2" width="1.4" height="1"/></g></svg><svg class="r" style="left:947.10px;top:225.50px;" width="9" height="9" viewBox="0 0 9 9"><rect x="0.9" y="1.2" width="7.2" height="7.4" rx="0.8" fill="none" stroke="#a8a2f2" stroke-width="0.65" stroke-dasharray="1.1 0.45"/><path d="M0.9 3H8.1" stroke="#a8a2f2" stroke-width="0.5" stroke-dasharray="0.7 0.4"/><path d="M2.6 0.5V1.8M6.4 0.5V1.8" stroke="#a8a2f2" stroke-width="0.6"/><g fill="#a8a2f2"><rect x="2.4" y="4" width="1" height="1"/><rect x="4" y="4" width="1" height="1"/><rect x="5.6" y="4" width="1" height="1"/><rect x="2.4" y="6" width="1" height="1"/><rect x="4" y="6" width="1" height="1"/><rect x="5.6" y="6" width="1" height="1"/></g></svg><div class="r" style="left:172.00px;top:282.90px;width:791.00px;height:1.00px;background:#f0f0f0;"></div><div id="t55" class="t" style="left:179.40px;top:261.36px;font-size:8.00px;line-height:10.40px;font-weight:700;color:#1f1f1f;letter-spacing:0.470px;">#44</div><div class="r" style="left:244.9px;top:258.00px;width:24.6px;height:16px;border-radius:1px;overflow:hidden"><svg class="r" style="left:0.00px;top:0.00px;position:absolute" width="24.6" height="16" viewBox="22 22 923 723" preserveAspectRatio="none"><defs><filter id="bth44" x="-5%" y="-5%" width="110%" height="110%"><feGaussianBlur stdDeviation="30"/></filter><clipPath id="cth44"><rect x="22" y="22" width="923" height="723"/></clipPath></defs><g clip-path="url(#cth44)"><g filter="url(#bth44)"><rect x="0" y="0" width="972" height="764" fill="#b8ac98"/><rect x="0" y="0" width="972" height="150" fill="#dcdcd8"/><rect x="0" y="300" width="972" height="200" fill="#a09078"/><ellipse cx="300" cy="450" rx="200" ry="120" fill="#8a7a68"/><ellipse cx="750" cy="600" rx="250" ry="140" fill="#c8bca8"/></g></g></svg></div><div id="t56" class="t" style="left:320.70px;top:261.82px;font-size:7.20px;line-height:9.36px;font-weight:400;color:#333;letter-spacing:-0.145px;-webkit-text-stroke:0.10px #333;">Red Tour Cappadocia</div><svg class="r" style="left:311.00px;top:263.40px;" width="7.5" height="5" viewBox="0 0 7.5 5"><path d="M0.5 2.5C2 0.3 5.5 0.3 7 2.5C5.5 4.7 2 4.7 0.5 2.5Z" fill="none" stroke="#3a6ae8" stroke-width="0.8"/><circle cx="3.75" cy="2.5" r="1.1" fill="none" stroke="#3a6ae8" stroke-width="0.7"/></svg><div class="r" style="left:442.80px;top:260.00px;width:30.50px;height:12.20px;background:#3271ef;border-radius:6.1px;"></div><div class="r" style="left:461.80px;top:261.40px;width:9.60px;height:9.60px;background:#fff;border-radius:50%;"></div><div class="r" style="left:574.80px;top:260.00px;width:30.50px;height:12.20px;background:#3271ef;border-radius:6.1px;"></div><div class="r" style="left:593.80px;top:261.40px;width:9.60px;height:9.60px;background:#fff;border-radius:50%;"></div><div id="t57" class="t" style="left:640.60px;top:261.71px;font-size:7.40px;line-height:9.62px;font-weight:700;color:#1f1f1f;letter-spacing:0.036px;">70 €</div><div id="t58" class="t" style="left:709.50px;top:261.94px;font-size:7.00px;line-height:9.10px;font-weight:700;color:#1b3a8f;letter-spacing:-0.063px;">Yönet</div><div class="r" style="left:773.00px;top:260.00px;width:51.00px;height:12.20px;background:#1f56e8;border-radius:6.1px;"></div><div id="t59" class="t" style="left:777.00px;top:262.06px;font-size:6.80px;line-height:8.84px;font-weight:400;color:#fff;-webkit-text-stroke:0.10px #fff;">Aktif</div><svg class="r" style="left:814.00px;top:264.50px;" width="5" height="3" viewBox="0 0 5 3"><path d="M0.4 0.4L2.5 2.5L4.6 0.4" fill="none" stroke="#fff" stroke-width="0.7"/></svg><svg class="r" style="left:837.70px;top:261.50px;" width="9" height="9" viewBox="0 0 9 9"><path d="M1 2.5H4.5M1 2.5V8.5H7V5" fill="none" stroke="#555" stroke-width="0.9"/><path d="M3.5 6L8 1.5" stroke="#555" stroke-width="1.2"/></svg><svg class="r" style="left:850.30px;top:261.50px;" width="9" height="9" viewBox="0 0 9 9"><path d="M1 2.5H4.5M1 2.5V8.5H7V5" fill="none" stroke="#8a70f0" stroke-width="0.9"/><path d="M3.5 6L8 1.5" stroke="#8a70f0" stroke-width="1.2"/></svg><svg class="r" style="left:863.90px;top:261.50px;" width="9" height="9" viewBox="0 0 9 9"><rect x="1.4" y="2.6" width="4.4" height="5.9" rx="0.6" fill="none" stroke="#111" stroke-width="0.85"/><path d="M3.4 2.4V1.2H7.6V6.6H5.9" fill="none" stroke="#111" stroke-width="0.85" stroke-linejoin="round"/></svg><svg class="r" style="left:878.50px;top:261.50px;" width="9" height="9" viewBox="0 0 9 9"><circle cx="4.5" cy="4.5" r="3.8" fill="none" stroke="#111" stroke-width="0.9"/><path d="M3.3 3.5C3.3 2.3 5.7 2.3 5.7 3.5C5.7 4.4 4.5 4.4 4.5 5.3" fill="none" stroke="#111" stroke-width="0.8"/><circle cx="4.5" cy="6.6" r="0.5" fill="#111"/></svg><svg class="r" style="left:892.80px;top:261.50px;" width="9" height="9" viewBox="0 0 9 9"><circle cx="3.8" cy="3.8" r="2.8" fill="none" stroke="#333" stroke-width="0.9"/><path d="M5.8 5.8L8.3 8.3" stroke="#333" stroke-width="1"/></svg><svg class="r" style="left:906.50px;top:261.50px;" width="9" height="9" viewBox="0 0 9 9"><path d="M3 5.5C2 4.8 2.2 1 3.9 1C5.6 1 5.8 4.8 4.8 5.5V6.2H6.8V8.3H1V6.2H3Z" fill="none" stroke="#555" stroke-width="0.7" stroke-linejoin="round"/><circle cx="8" cy="4" r="0.7" fill="#555"/></svg><svg class="r" style="left:919.50px;top:261.50px;" width="9" height="9" viewBox="0 0 9 9"><rect x="0.9" y="1.2" width="7.2" height="7.4" rx="0.8" fill="none" stroke="#f03030" stroke-width="0.65" stroke-dasharray="1.1 0.45"/><path d="M0.9 3H8.1" stroke="#f03030" stroke-width="0.5" stroke-dasharray="0.7 0.4"/><path d="M2.6 0.5V1.8M6.4 0.5V1.8" stroke="#f03030" stroke-width="0.6"/><g fill="#ee1c1c"><rect x="2.4" y="4" width="1" height="1"/><rect x="4" y="4" width="1" height="1"/><rect x="5.6" y="4" width="1" height="1"/><rect x="2.4" y="6" width="1" height="1"/><rect x="4" y="6" width="1" height="1"/><rect x="5.6" y="6" width="1" height="1"/></g></svg><svg class="r" style="left:933.50px;top:261.50px;" width="9" height="9" viewBox="0 0 9 9"><rect x="1.5" y="1" width="6" height="7.4" rx="0.4" fill="none" stroke="#555" stroke-width="0.8"/><path d="M1.5 3.2H7.5" stroke="#555" stroke-width="0.7"/><g fill="#555"><rect x="2.5" y="4.1" width="1.4" height="1"/><rect x="5" y="4.1" width="1.4" height="1"/><rect x="2.5" y="6.2" width="1.4" height="1"/><rect x="5" y="6.2" width="1.4" height="1"/></g></svg><svg class="r" style="left:947.10px;top:261.50px;" width="9" height="9" viewBox="0 0 9 9"><rect x="0.9" y="1.2" width="7.2" height="7.4" rx="0.8" fill="none" stroke="#a8a2f2" stroke-width="0.65" stroke-dasharray="1.1 0.45"/><path d="M0.9 3H8.1" stroke="#a8a2f2" stroke-width="0.5" stroke-dasharray="0.7 0.4"/><path d="M2.6 0.5V1.8M6.4 0.5V1.8" stroke="#a8a2f2" stroke-width="0.6"/><g fill="#a8a2f2"><rect x="2.4" y="4" width="1" height="1"/><rect x="4" y="4" width="1" height="1"/><rect x="5.6" y="4" width="1" height="1"/><rect x="2.4" y="6" width="1" height="1"/><rect x="4" y="6" width="1" height="1"/><rect x="5.6" y="6" width="1" height="1"/></g></svg><div class="r" style="left:172.00px;top:318.50px;width:791.00px;height:1.00px;background:#f0f0f0;"></div><div id="t60" class="t" style="left:179.40px;top:296.86px;font-size:8.00px;line-height:10.40px;font-weight:700;color:#1f1f1f;letter-spacing:0.112px;">#6283</div><div class="r" style="left:244.9px;top:293.50px;width:24.6px;height:16px;border-radius:1px;overflow:hidden"><svg class="r" style="left:0.00px;top:0.00px;position:absolute" width="24.6" height="16" viewBox="22 22 923 723" preserveAspectRatio="none"><defs><filter id="bth6283" x="-5%" y="-5%" width="110%" height="110%"><feGaussianBlur stdDeviation="30"/></filter><clipPath id="cth6283"><rect x="22" y="22" width="923" height="723"/></clipPath></defs><g clip-path="url(#cth6283)"><g filter="url(#bth6283)"><rect x="0" y="0" width="972" height="764" fill="#8c9a86"/><rect x="0" y="0" width="972" height="320" fill="#8aa468"/><ellipse cx="180" cy="80" rx="180" ry="80" fill="#98b070"/><ellipse cx="420" cy="120" rx="120" ry="90" fill="#86a660"/><ellipse cx="700" cy="90" rx="220" ry="100" fill="#a8ac98"/><ellipse cx="880" cy="200" rx="100" ry="120" fill="#90b070"/><ellipse cx="660" cy="230" rx="90" ry="90" fill="#6e9050"/><polygon points="100,160 200,140 280,180 280,260 100,260" fill="#9e8466"/><rect x="110" y="190" width="50" height="60" fill="#4e4a40"/><rect x="0" y="200" width="60" height="80" fill="#7a6a50"/><polygon points="0,270 300,235 460,225 400,320 0,370" fill="#8c8476"/><polygon points="420,225 560,225 972,450 972,764 100,764 300,560 400,450" fill="#8e9e8c"/><polygon points="480,300 600,300 700,420 550,520 400,500" fill="#7e9484"/><polygon points="0,320 420,300 400,450 270,560 0,640" fill="#3a2828"/><polygon points="0,340 400,320 400,332 0,354" fill="#6a4444"/><polygon points="0,390 360,374 360,386 0,404" fill="#6a4444"/><polygon points="0,440 320,428 320,440 0,454" fill="#6a4444"/><polygon points="0,490 280,482 280,494 0,504" fill="#6a4444"/><polygon points="0,540 240,536 240,548 0,554" fill="#6a4444"/><polygon points="0,590 200,590 200,602 0,604" fill="#6a4444"/><polygon points="570,280 972,250 972,450 700,390" fill="#6e9c48"/><polygon points="700,380 972,330 972,450" fill="#5a8a3a"/><rect x="470" y="350" width="150" height="45" fill="#c4aca8"/><rect x="600" y="395" width="200" height="70" fill="#b8a0a2"/><rect x="670" y="490" width="250" height="130" fill="#cabaaa"/><rect x="700" y="510" width="190" height="70" fill="#8a6a78"/><rect x="310" y="530" width="380" height="40" fill="#c4bcac"/><rect x="380" y="425" width="230" height="25" fill="#c8c0b0"/><ellipse cx="560" cy="700" rx="220" ry="55" fill="#d0dad6"/><ellipse cx="330" cy="640" rx="60" ry="40" fill="#c8d4d0"/><polygon points="0,600 320,480 300,540 120,764 0,764" fill="#86847c"/><polygon points="0,700 100,640 60,764 0,764" fill="#5a5a54"/></g></g></svg></div><div id="t61" class="t" style="left:320.70px;top:297.32px;font-size:7.20px;line-height:9.36px;font-weight:400;color:#333;letter-spacing:-0.134px;-webkit-text-stroke:0.10px #333;">Green Tour Cappadocia</div><svg class="r" style="left:311.00px;top:298.90px;" width="7.5" height="5" viewBox="0 0 7.5 5"><path d="M0.5 2.5C2 0.3 5.5 0.3 7 2.5C5.5 4.7 2 4.7 0.5 2.5Z" fill="none" stroke="#3a6ae8" stroke-width="0.8"/><circle cx="3.75" cy="2.5" r="1.1" fill="none" stroke="#3a6ae8" stroke-width="0.7"/></svg><div class="r" style="left:442.80px;top:295.50px;width:30.50px;height:12.20px;background:#3271ef;border-radius:6.1px;"></div><div class="r" style="left:461.80px;top:296.90px;width:9.60px;height:9.60px;background:#fff;border-radius:50%;"></div><div class="r" style="left:574.80px;top:295.50px;width:30.50px;height:12.20px;background:#3271ef;border-radius:6.1px;"></div><div class="r" style="left:593.80px;top:296.90px;width:9.60px;height:9.60px;background:#fff;border-radius:50%;"></div><div id="t62" class="t" style="left:640.60px;top:297.21px;font-size:7.40px;line-height:9.62px;font-weight:700;color:#1f1f1f;letter-spacing:0.036px;">75 €</div><div id="t63" class="t" style="left:709.50px;top:297.44px;font-size:7.00px;line-height:9.10px;font-weight:700;color:#1b3a8f;letter-spacing:-0.063px;">Yönet</div><div class="r" style="left:773.00px;top:295.50px;width:51.00px;height:12.20px;background:#1f56e8;border-radius:6.1px;"></div><div id="t64" class="t" style="left:777.00px;top:297.56px;font-size:6.80px;line-height:8.84px;font-weight:400;color:#fff;-webkit-text-stroke:0.10px #fff;">Aktif</div><svg class="r" style="left:814.00px;top:300.00px;" width="5" height="3" viewBox="0 0 5 3"><path d="M0.4 0.4L2.5 2.5L4.6 0.4" fill="none" stroke="#fff" stroke-width="0.7"/></svg><svg class="r" style="left:837.70px;top:297.00px;" width="9" height="9" viewBox="0 0 9 9"><path d="M1 2.5H4.5M1 2.5V8.5H7V5" fill="none" stroke="#555" stroke-width="0.9"/><path d="M3.5 6L8 1.5" stroke="#555" stroke-width="1.2"/></svg><svg class="r" style="left:850.30px;top:297.00px;" width="9" height="9" viewBox="0 0 9 9"><path d="M1 2.5H4.5M1 2.5V8.5H7V5" fill="none" stroke="#8a70f0" stroke-width="0.9"/><path d="M3.5 6L8 1.5" stroke="#8a70f0" stroke-width="1.2"/></svg><svg class="r" style="left:863.90px;top:297.00px;" width="9" height="9" viewBox="0 0 9 9"><rect x="1.4" y="2.6" width="4.4" height="5.9" rx="0.6" fill="none" stroke="#111" stroke-width="0.85"/><path d="M3.4 2.4V1.2H7.6V6.6H5.9" fill="none" stroke="#111" stroke-width="0.85" stroke-linejoin="round"/></svg><svg class="r" style="left:878.50px;top:297.00px;" width="9" height="9" viewBox="0 0 9 9"><circle cx="4.5" cy="4.5" r="3.8" fill="none" stroke="#111" stroke-width="0.9"/><path d="M3.3 3.5C3.3 2.3 5.7 2.3 5.7 3.5C5.7 4.4 4.5 4.4 4.5 5.3" fill="none" stroke="#111" stroke-width="0.8"/><circle cx="4.5" cy="6.6" r="0.5" fill="#111"/></svg><svg class="r" style="left:892.80px;top:297.00px;" width="9" height="9" viewBox="0 0 9 9"><circle cx="3.8" cy="3.8" r="2.8" fill="none" stroke="#333" stroke-width="0.9"/><path d="M5.8 5.8L8.3 8.3" stroke="#333" stroke-width="1"/></svg><svg class="r" style="left:906.50px;top:297.00px;" width="9" height="9" viewBox="0 0 9 9"><path d="M3 5.5C2 4.8 2.2 1 3.9 1C5.6 1 5.8 4.8 4.8 5.5V6.2H6.8V8.3H1V6.2H3Z" fill="none" stroke="#555" stroke-width="0.7" stroke-linejoin="round"/><circle cx="8" cy="4" r="0.7" fill="#555"/></svg><svg class="r" style="left:919.50px;top:297.00px;" width="9" height="9" viewBox="0 0 9 9"><rect x="0.9" y="1.2" width="7.2" height="7.4" rx="0.8" fill="none" stroke="#f03030" stroke-width="0.65" stroke-dasharray="1.1 0.45"/><path d="M0.9 3H8.1" stroke="#f03030" stroke-width="0.5" stroke-dasharray="0.7 0.4"/><path d="M2.6 0.5V1.8M6.4 0.5V1.8" stroke="#f03030" stroke-width="0.6"/><g fill="#ee1c1c"><rect x="2.4" y="4" width="1" height="1"/><rect x="4" y="4" width="1" height="1"/><rect x="5.6" y="4" width="1" height="1"/><rect x="2.4" y="6" width="1" height="1"/><rect x="4" y="6" width="1" height="1"/><rect x="5.6" y="6" width="1" height="1"/></g></svg><svg class="r" style="left:933.50px;top:297.00px;" width="9" height="9" viewBox="0 0 9 9"><rect x="1.5" y="1" width="6" height="7.4" rx="0.4" fill="none" stroke="#555" stroke-width="0.8"/><path d="M1.5 3.2H7.5" stroke="#555" stroke-width="0.7"/><g fill="#555"><rect x="2.5" y="4.1" width="1.4" height="1"/><rect x="5" y="4.1" width="1.4" height="1"/><rect x="2.5" y="6.2" width="1.4" height="1"/><rect x="5" y="6.2" width="1.4" height="1"/></g></svg><svg class="r" style="left:947.10px;top:297.00px;" width="9" height="9" viewBox="0 0 9 9"><rect x="0.9" y="1.2" width="7.2" height="7.4" rx="0.8" fill="none" stroke="#a8a2f2" stroke-width="0.65" stroke-dasharray="1.1 0.45"/><path d="M0.9 3H8.1" stroke="#a8a2f2" stroke-width="0.5" stroke-dasharray="0.7 0.4"/><path d="M2.6 0.5V1.8M6.4 0.5V1.8" stroke="#a8a2f2" stroke-width="0.6"/><g fill="#a8a2f2"><rect x="2.4" y="4" width="1" height="1"/><rect x="4" y="4" width="1" height="1"/><rect x="5.6" y="4" width="1" height="1"/><rect x="2.4" y="6" width="1" height="1"/><rect x="4" y="6" width="1" height="1"/><rect x="5.6" y="6" width="1" height="1"/></g></svg><div class="r" style="left:172.00px;top:354.50px;width:791.00px;height:1.00px;background:#f0f0f0;"></div><div id="t65" class="t" style="left:179.40px;top:332.36px;font-size:8.00px;line-height:10.40px;font-weight:700;color:#1f1f1f;letter-spacing:0.470px;">#45</div><div class="r" style="left:244.9px;top:324.70px;width:24.6px;height:24.6px;border-radius:2px;overflow:hidden"><svg class="r" style="left:0.00px;top:0.00px;position:absolute" width="24.6" height="24.6" viewBox="22 22 923 723" preserveAspectRatio="none"><defs><filter id="bth45" x="-5%" y="-5%" width="110%" height="110%"><feGaussianBlur stdDeviation="30"/></filter><clipPath id="cth45"><rect x="22" y="22" width="923" height="723"/></clipPath></defs><g clip-path="url(#cth45)"><g filter="url(#bth45)"><defs><linearGradient id="gth45" x1="0" y1="0" x2="0" y2="1"><stop offset="0" stop-color="#2e6488"/><stop offset="0.18" stop-color="#7a9aa8"/><stop offset="0.35" stop-color="#d8c898"/><stop offset="0.5" stop-color="#e0c088"/></linearGradient></defs><rect x="0" y="0" width="972" height="764" fill="url(#gth45)"/><ellipse cx="480" cy="80" rx="280" ry="35" fill="#c0ccd0"/><ellipse cx="300" cy="110" rx="120" ry="20" fill="#e0e4e0"/><polygon points="330,330 400,190 430,160 470,170 520,260 530,330" fill="#6a5c48"/><polygon points="550,290 590,170 640,160 680,260" fill="#7c6c56"/><polygon points="680,270 700,180 740,175 750,270" fill="#86765e"/><polygon points="770,310 790,170 840,160 880,320" fill="#74644e"/><polygon points="260,330 290,250 330,330" fill="#6a604e"/><ellipse cx="660" cy="320" rx="220" ry="55" fill="#dccca8"/><polygon points="150,390 972,370 972,764 150,764" fill="#b09c74"/><polygon points="300,430 600,420 972,540 972,764 380,764" fill="#c2b298"/><polygon points="0,0 110,0 160,300 170,764 0,764" fill="#b49452"/><polygon points="0,300 90,250 130,500 60,764 0,764" fill="#c4a868"/><polygon points="150,500 370,600 380,764 150,764" fill="#a48c5c"/><rect x="175" y="340" width="125" height="100" fill="#5a2a22"/><rect x="200" y="310" width="60" height="40" fill="#3a2a2a"/><ellipse cx="370" cy="360" rx="35" ry="45" fill="#e8e0d0"/><rect x="640" y="310" width="120" height="140" fill="#d898b0"/><rect x="600" y="330" width="50" height="130" fill="#222"/><rect x="640" y="440" width="60" height="80" fill="#34406a"/><ellipse cx="645" cy="292" rx="22" ry="16" fill="#e8f0f8"/><ellipse cx="700" cy="296" rx="26" ry="18" fill="#e8f0f8"/><polygon points="545,450 850,440 900,560 880,660 560,660" fill="#2a2822"/><ellipse cx="730" cy="530" rx="35" ry="15" fill="#e0d8b0"/><ellipse cx="580" cy="580" rx="35" ry="60" fill="#1c1a16"/><ellipse cx="670" cy="610" rx="45" ry="55" fill="#1c1a16"/><ellipse cx="860" cy="600" rx="40" ry="60" fill="#1c1a16"/><ellipse cx="910" cy="440" rx="60" ry="100" fill="#a89068"/></g></g></svg></div><div id="t66" class="t" style="left:320.70px;top:328.17px;font-size:7.20px;line-height:9.36px;font-weight:400;color:#333;letter-spacing:-0.085px;-webkit-text-stroke:0.10px #333;">Sunset ATV Tour Through the</div><div id="t67" class="t" style="left:320.70px;top:337.47px;font-size:7.20px;line-height:9.36px;font-weight:400;color:#333;letter-spacing:-0.115px;-webkit-text-stroke:0.10px #333;">Valleys of Cappadocia</div><svg class="r" style="left:311.00px;top:334.40px;" width="7.5" height="5" viewBox="0 0 7.5 5"><path d="M0.5 2.5C2 0.3 5.5 0.3 7 2.5C5.5 4.7 2 4.7 0.5 2.5Z" fill="none" stroke="#3a6ae8" stroke-width="0.8"/><circle cx="3.75" cy="2.5" r="1.1" fill="none" stroke="#3a6ae8" stroke-width="0.7"/></svg><div class="r" style="left:442.80px;top:331.00px;width:30.50px;height:12.20px;background:#3271ef;border-radius:6.1px;"></div><div class="r" style="left:461.80px;top:332.40px;width:9.60px;height:9.60px;background:#fff;border-radius:50%;"></div><div class="r" style="left:574.80px;top:331.00px;width:30.50px;height:12.20px;background:#3271ef;border-radius:6.1px;"></div><div class="r" style="left:593.80px;top:332.40px;width:9.60px;height:9.60px;background:#fff;border-radius:50%;"></div><div id="t68" class="t" style="left:640.60px;top:332.71px;font-size:7.40px;line-height:9.62px;font-weight:700;color:#1f1f1f;letter-spacing:0.036px;">45 €</div><div id="t69" class="t" style="left:709.50px;top:332.94px;font-size:7.00px;line-height:9.10px;font-weight:700;color:#1b3a8f;letter-spacing:-0.063px;">Yönet</div><div class="r" style="left:773.00px;top:331.00px;width:51.00px;height:12.20px;background:#1f56e8;border-radius:6.1px;"></div><div id="t70" class="t" style="left:777.00px;top:333.06px;font-size:6.80px;line-height:8.84px;font-weight:400;color:#fff;-webkit-text-stroke:0.10px #fff;">Aktif</div><svg class="r" style="left:814.00px;top:335.50px;" width="5" height="3" viewBox="0 0 5 3"><path d="M0.4 0.4L2.5 2.5L4.6 0.4" fill="none" stroke="#fff" stroke-width="0.7"/></svg><svg class="r" style="left:837.70px;top:332.50px;" width="9" height="9" viewBox="0 0 9 9"><path d="M1 2.5H4.5M1 2.5V8.5H7V5" fill="none" stroke="#555" stroke-width="0.9"/><path d="M3.5 6L8 1.5" stroke="#555" stroke-width="1.2"/></svg><svg class="r" style="left:850.30px;top:332.50px;" width="9" height="9" viewBox="0 0 9 9"><path d="M1 2.5H4.5M1 2.5V8.5H7V5" fill="none" stroke="#8a70f0" stroke-width="0.9"/><path d="M3.5 6L8 1.5" stroke="#8a70f0" stroke-width="1.2"/></svg><svg class="r" style="left:863.90px;top:332.50px;" width="9" height="9" viewBox="0 0 9 9"><rect x="1.4" y="2.6" width="4.4" height="5.9" rx="0.6" fill="none" stroke="#111" stroke-width="0.85"/><path d="M3.4 2.4V1.2H7.6V6.6H5.9" fill="none" stroke="#111" stroke-width="0.85" stroke-linejoin="round"/></svg><svg class="r" style="left:878.50px;top:332.50px;" width="9" height="9" viewBox="0 0 9 9"><circle cx="4.5" cy="4.5" r="3.8" fill="none" stroke="#111" stroke-width="0.9"/><path d="M3.3 3.5C3.3 2.3 5.7 2.3 5.7 3.5C5.7 4.4 4.5 4.4 4.5 5.3" fill="none" stroke="#111" stroke-width="0.8"/><circle cx="4.5" cy="6.6" r="0.5" fill="#111"/></svg><svg class="r" style="left:892.80px;top:332.50px;" width="9" height="9" viewBox="0 0 9 9"><circle cx="3.8" cy="3.8" r="2.8" fill="none" stroke="#333" stroke-width="0.9"/><path d="M5.8 5.8L8.3 8.3" stroke="#333" stroke-width="1"/></svg><svg class="r" style="left:906.50px;top:332.50px;" width="9" height="9" viewBox="0 0 9 9"><path d="M3 5.5C2 4.8 2.2 1 3.9 1C5.6 1 5.8 4.8 4.8 5.5V6.2H6.8V8.3H1V6.2H3Z" fill="none" stroke="#555" stroke-width="0.7" stroke-linejoin="round"/><circle cx="8" cy="4" r="0.7" fill="#555"/></svg><svg class="r" style="left:919.50px;top:332.50px;" width="9" height="9" viewBox="0 0 9 9"><rect x="0.9" y="1.2" width="7.2" height="7.4" rx="0.8" fill="none" stroke="#f03030" stroke-width="0.65" stroke-dasharray="1.1 0.45"/><path d="M0.9 3H8.1" stroke="#f03030" stroke-width="0.5" stroke-dasharray="0.7 0.4"/><path d="M2.6 0.5V1.8M6.4 0.5V1.8" stroke="#f03030" stroke-width="0.6"/><g fill="#ee1c1c"><rect x="2.4" y="4" width="1" height="1"/><rect x="4" y="4" width="1" height="1"/><rect x="5.6" y="4" width="1" height="1"/><rect x="2.4" y="6" width="1" height="1"/><rect x="4" y="6" width="1" height="1"/><rect x="5.6" y="6" width="1" height="1"/></g></svg><svg class="r" style="left:933.50px;top:332.50px;" width="9" height="9" viewBox="0 0 9 9"><rect x="1.5" y="1" width="6" height="7.4" rx="0.4" fill="none" stroke="#555" stroke-width="0.8"/><path d="M1.5 3.2H7.5" stroke="#555" stroke-width="0.7"/><g fill="#555"><rect x="2.5" y="4.1" width="1.4" height="1"/><rect x="5" y="4.1" width="1.4" height="1"/><rect x="2.5" y="6.2" width="1.4" height="1"/><rect x="5" y="6.2" width="1.4" height="1"/></g></svg><svg class="r" style="left:947.10px;top:332.50px;" width="9" height="9" viewBox="0 0 9 9"><rect x="0.9" y="1.2" width="7.2" height="7.4" rx="0.8" fill="none" stroke="#a8a2f2" stroke-width="0.65" stroke-dasharray="1.1 0.45"/><path d="M0.9 3H8.1" stroke="#a8a2f2" stroke-width="0.5" stroke-dasharray="0.7 0.4"/><path d="M2.6 0.5V1.8M6.4 0.5V1.8" stroke="#a8a2f2" stroke-width="0.6"/><g fill="#a8a2f2"><rect x="2.4" y="4" width="1" height="1"/><rect x="4" y="4" width="1" height="1"/><rect x="5.6" y="4" width="1" height="1"/><rect x="2.4" y="6" width="1" height="1"/><rect x="4" y="6" width="1" height="1"/><rect x="5.6" y="6" width="1" height="1"/></g></svg><div class="r" style="left:172.00px;top:393.00px;width:791.00px;height:1.00px;background:#f0f0f0;"></div><div id="t71" class="t" style="left:179.40px;top:369.86px;font-size:8.00px;line-height:10.40px;font-weight:700;color:#1f1f1f;letter-spacing:0.470px;">#46</div><div class="r" style="left:244.9px;top:362.20px;width:24.6px;height:24.6px;border-radius:2px;overflow:hidden"><svg class="r" style="left:0.00px;top:0.00px;position:absolute" width="24.6" height="24.6" viewBox="22 22 923 723" preserveAspectRatio="none"><defs><filter id="bth46" x="-5%" y="-5%" width="110%" height="110%"><feGaussianBlur stdDeviation="30"/></filter><clipPath id="cth46"><rect x="22" y="22" width="923" height="723"/></clipPath></defs><g clip-path="url(#cth46)"><g filter="url(#bth46)"><rect x="0" y="0" width="972" height="764" fill="#c8ac84"/><rect x="0" y="0" width="972" height="160" fill="#9cb4cc"/><polygon points="0,150 250,100 300,500 0,600" fill="#d8c0a0"/><polygon points="650,120 972,140 972,500 700,450" fill="#c09a70"/><ellipse cx="520" cy="620" rx="200" ry="170" fill="#3a2a20"/><ellipse cx="500" cy="330" rx="60" ry="110" fill="#e8e0d8"/></g></g></svg></div><div id="t72" class="t" style="left:320.70px;top:361.02px;font-size:7.20px;line-height:9.36px;font-weight:400;color:#333;letter-spacing:-0.113px;-webkit-text-stroke:0.10px #333;">Sunset Horseback Riding Tour</div><div id="t73" class="t" style="left:320.70px;top:370.32px;font-size:7.20px;line-height:9.36px;font-weight:400;color:#333;letter-spacing:-0.090px;-webkit-text-stroke:0.10px #333;">Through the Valleys of</div><div id="t74" class="t" style="left:320.70px;top:379.62px;font-size:7.20px;line-height:9.36px;font-weight:400;color:#333;letter-spacing:-0.108px;-webkit-text-stroke:0.10px #333;">Cappadocia</div><svg class="r" style="left:311.00px;top:371.90px;" width="7.5" height="5" viewBox="0 0 7.5 5"><path d="M0.5 2.5C2 0.3 5.5 0.3 7 2.5C5.5 4.7 2 4.7 0.5 2.5Z" fill="none" stroke="#3a6ae8" stroke-width="0.8"/><circle cx="3.75" cy="2.5" r="1.1" fill="none" stroke="#3a6ae8" stroke-width="0.7"/></svg><div class="r" style="left:442.80px;top:368.50px;width:30.50px;height:12.20px;background:#3271ef;border-radius:6.1px;"></div><div class="r" style="left:461.80px;top:369.90px;width:9.60px;height:9.60px;background:#fff;border-radius:50%;"></div><div class="r" style="left:574.80px;top:368.50px;width:30.50px;height:12.20px;background:#3271ef;border-radius:6.1px;"></div><div class="r" style="left:593.80px;top:369.90px;width:9.60px;height:9.60px;background:#fff;border-radius:50%;"></div><div id="t75" class="t" style="left:640.60px;top:370.21px;font-size:7.40px;line-height:9.62px;font-weight:700;color:#1f1f1f;letter-spacing:0.036px;">60 €</div><div id="t76" class="t" style="left:709.50px;top:370.44px;font-size:7.00px;line-height:9.10px;font-weight:700;color:#1b3a8f;letter-spacing:-0.063px;">Yönet</div><div class="r" style="left:773.00px;top:368.50px;width:51.00px;height:12.20px;background:#1f56e8;border-radius:6.1px;"></div><div id="t77" class="t" style="left:777.00px;top:370.56px;font-size:6.80px;line-height:8.84px;font-weight:400;color:#fff;-webkit-text-stroke:0.10px #fff;">Aktif</div><svg class="r" style="left:814.00px;top:373.00px;" width="5" height="3" viewBox="0 0 5 3"><path d="M0.4 0.4L2.5 2.5L4.6 0.4" fill="none" stroke="#fff" stroke-width="0.7"/></svg><svg class="r" style="left:837.70px;top:370.00px;" width="9" height="9" viewBox="0 0 9 9"><path d="M1 2.5H4.5M1 2.5V8.5H7V5" fill="none" stroke="#555" stroke-width="0.9"/><path d="M3.5 6L8 1.5" stroke="#555" stroke-width="1.2"/></svg><svg class="r" style="left:850.30px;top:370.00px;" width="9" height="9" viewBox="0 0 9 9"><path d="M1 2.5H4.5M1 2.5V8.5H7V5" fill="none" stroke="#8a70f0" stroke-width="0.9"/><path d="M3.5 6L8 1.5" stroke="#8a70f0" stroke-width="1.2"/></svg><svg class="r" style="left:863.90px;top:370.00px;" width="9" height="9" viewBox="0 0 9 9"><rect x="1.4" y="2.6" width="4.4" height="5.9" rx="0.6" fill="none" stroke="#111" stroke-width="0.85"/><path d="M3.4 2.4V1.2H7.6V6.6H5.9" fill="none" stroke="#111" stroke-width="0.85" stroke-linejoin="round"/></svg><svg class="r" style="left:878.50px;top:370.00px;" width="9" height="9" viewBox="0 0 9 9"><circle cx="4.5" cy="4.5" r="3.8" fill="none" stroke="#111" stroke-width="0.9"/><path d="M3.3 3.5C3.3 2.3 5.7 2.3 5.7 3.5C5.7 4.4 4.5 4.4 4.5 5.3" fill="none" stroke="#111" stroke-width="0.8"/><circle cx="4.5" cy="6.6" r="0.5" fill="#111"/></svg><svg class="r" style="left:892.80px;top:370.00px;" width="9" height="9" viewBox="0 0 9 9"><circle cx="3.8" cy="3.8" r="2.8" fill="none" stroke="#333" stroke-width="0.9"/><path d="M5.8 5.8L8.3 8.3" stroke="#333" stroke-width="1"/></svg><svg class="r" style="left:906.50px;top:370.00px;" width="9" height="9" viewBox="0 0 9 9"><path d="M3 5.5C2 4.8 2.2 1 3.9 1C5.6 1 5.8 4.8 4.8 5.5V6.2H6.8V8.3H1V6.2H3Z" fill="none" stroke="#555" stroke-width="0.7" stroke-linejoin="round"/><circle cx="8" cy="4" r="0.7" fill="#555"/></svg><svg class="r" style="left:919.50px;top:370.00px;" width="9" height="9" viewBox="0 0 9 9"><rect x="0.9" y="1.2" width="7.2" height="7.4" rx="0.8" fill="none" stroke="#f03030" stroke-width="0.65" stroke-dasharray="1.1 0.45"/><path d="M0.9 3H8.1" stroke="#f03030" stroke-width="0.5" stroke-dasharray="0.7 0.4"/><path d="M2.6 0.5V1.8M6.4 0.5V1.8" stroke="#f03030" stroke-width="0.6"/><g fill="#ee1c1c"><rect x="2.4" y="4" width="1" height="1"/><rect x="4" y="4" width="1" height="1"/><rect x="5.6" y="4" width="1" height="1"/><rect x="2.4" y="6" width="1" height="1"/><rect x="4" y="6" width="1" height="1"/><rect x="5.6" y="6" width="1" height="1"/></g></svg><svg class="r" style="left:933.50px;top:370.00px;" width="9" height="9" viewBox="0 0 9 9"><rect x="1.5" y="1" width="6" height="7.4" rx="0.4" fill="none" stroke="#555" stroke-width="0.8"/><path d="M1.5 3.2H7.5" stroke="#555" stroke-width="0.7"/><g fill="#555"><rect x="2.5" y="4.1" width="1.4" height="1"/><rect x="5" y="4.1" width="1.4" height="1"/><rect x="2.5" y="6.2" width="1.4" height="1"/><rect x="5" y="6.2" width="1.4" height="1"/></g></svg><svg class="r" style="left:947.10px;top:370.00px;" width="9" height="9" viewBox="0 0 9 9"><rect x="0.9" y="1.2" width="7.2" height="7.4" rx="0.8" fill="none" stroke="#a8a2f2" stroke-width="0.65" stroke-dasharray="1.1 0.45"/><path d="M0.9 3H8.1" stroke="#a8a2f2" stroke-width="0.5" stroke-dasharray="0.7 0.4"/><path d="M2.6 0.5V1.8M6.4 0.5V1.8" stroke="#a8a2f2" stroke-width="0.6"/><g fill="#a8a2f2"><rect x="2.4" y="4" width="1" height="1"/><rect x="4" y="4" width="1" height="1"/><rect x="5.6" y="4" width="1" height="1"/><rect x="2.4" y="6" width="1" height="1"/><rect x="4" y="6" width="1" height="1"/><rect x="5.6" y="6" width="1" height="1"/></g></svg><div class="r" style="left:172.00px;top:429.10px;width:791.00px;height:1.00px;background:#f0f0f0;"></div><div id="t78" class="t" style="left:709.50px;top:407.54px;font-size:7.00px;line-height:9.10px;font-weight:700;color:#1b3a8f;letter-spacing:-0.063px;">Yönet</div><div class="r" style="left:773.00px;top:405.60px;width:51.00px;height:12.20px;background:#1f56e8;border-radius:6.1px;"></div><div id="t79" class="t" style="left:777.00px;top:407.66px;font-size:6.80px;line-height:8.84px;font-weight:400;color:#fff;-webkit-text-stroke:0.10px #fff;">Aktif</div><svg class="r" style="left:814.00px;top:410.10px;" width="5" height="3" viewBox="0 0 5 3"><path d="M0.4 0.4L2.5 2.5L4.6 0.4" fill="none" stroke="#fff" stroke-width="0.7"/></svg><svg class="r" style="left:837.70px;top:407.10px;" width="9" height="9" viewBox="0 0 9 9"><path d="M1 2.5H4.5M1 2.5V8.5H7V5" fill="none" stroke="#555" stroke-width="0.9"/><path d="M3.5 6L8 1.5" stroke="#555" stroke-width="1.2"/></svg><svg class="r" style="left:850.30px;top:407.10px;" width="9" height="9" viewBox="0 0 9 9"><path d="M1 2.5H4.5M1 2.5V8.5H7V5" fill="none" stroke="#8a70f0" stroke-width="0.9"/><path d="M3.5 6L8 1.5" stroke="#8a70f0" stroke-width="1.2"/></svg><svg class="r" style="left:863.90px;top:407.10px;" width="9" height="9" viewBox="0 0 9 9"><rect x="1.4" y="2.6" width="4.4" height="5.9" rx="0.6" fill="none" stroke="#111" stroke-width="0.85"/><path d="M3.4 2.4V1.2H7.6V6.6H5.9" fill="none" stroke="#111" stroke-width="0.85" stroke-linejoin="round"/></svg><svg class="r" style="left:878.50px;top:407.10px;" width="9" height="9" viewBox="0 0 9 9"><circle cx="4.5" cy="4.5" r="3.8" fill="none" stroke="#111" stroke-width="0.9"/><path d="M3.3 3.5C3.3 2.3 5.7 2.3 5.7 3.5C5.7 4.4 4.5 4.4 4.5 5.3" fill="none" stroke="#111" stroke-width="0.8"/><circle cx="4.5" cy="6.6" r="0.5" fill="#111"/></svg><svg class="r" style="left:892.80px;top:407.10px;" width="9" height="9" viewBox="0 0 9 9"><circle cx="3.8" cy="3.8" r="2.8" fill="none" stroke="#333" stroke-width="0.9"/><path d="M5.8 5.8L8.3 8.3" stroke="#333" stroke-width="1"/></svg><svg class="r" style="left:906.50px;top:407.10px;" width="9" height="9" viewBox="0 0 9 9"><path d="M3 5.5C2 4.8 2.2 1 3.9 1C5.6 1 5.8 4.8 4.8 5.5V6.2H6.8V8.3H1V6.2H3Z" fill="none" stroke="#555" stroke-width="0.7" stroke-linejoin="round"/><circle cx="8" cy="4" r="0.7" fill="#555"/></svg><svg class="r" style="left:919.50px;top:407.10px;" width="9" height="9" viewBox="0 0 9 9"><rect x="0.9" y="1.2" width="7.2" height="7.4" rx="0.8" fill="none" stroke="#f03030" stroke-width="0.65" stroke-dasharray="1.1 0.45"/><path d="M0.9 3H8.1" stroke="#f03030" stroke-width="0.5" stroke-dasharray="0.7 0.4"/><path d="M2.6 0.5V1.8M6.4 0.5V1.8" stroke="#f03030" stroke-width="0.6"/><g fill="#ee1c1c"><rect x="2.4" y="4" width="1" height="1"/><rect x="4" y="4" width="1" height="1"/><rect x="5.6" y="4" width="1" height="1"/><rect x="2.4" y="6" width="1" height="1"/><rect x="4" y="6" width="1" height="1"/><rect x="5.6" y="6" width="1" height="1"/></g></svg><svg class="r" style="left:933.50px;top:407.10px;" width="9" height="9" viewBox="0 0 9 9"><rect x="1.5" y="1" width="6" height="7.4" rx="0.4" fill="none" stroke="#555" stroke-width="0.8"/><path d="M1.5 3.2H7.5" stroke="#555" stroke-width="0.7"/><g fill="#555"><rect x="2.5" y="4.1" width="1.4" height="1"/><rect x="5" y="4.1" width="1.4" height="1"/><rect x="2.5" y="6.2" width="1.4" height="1"/><rect x="5" y="6.2" width="1.4" height="1"/></g></svg><svg class="r" style="left:947.10px;top:407.10px;" width="9" height="9" viewBox="0 0 9 9"><rect x="0.9" y="1.2" width="7.2" height="7.4" rx="0.8" fill="none" stroke="#a8a2f2" stroke-width="0.65" stroke-dasharray="1.1 0.45"/><path d="M0.9 3H8.1" stroke="#a8a2f2" stroke-width="0.5" stroke-dasharray="0.7 0.4"/><path d="M2.6 0.5V1.8M6.4 0.5V1.8" stroke="#a8a2f2" stroke-width="0.6"/><g fill="#a8a2f2"><rect x="2.4" y="4" width="1" height="1"/><rect x="4" y="4" width="1" height="1"/><rect x="5.6" y="4" width="1" height="1"/><rect x="2.4" y="6" width="1" height="1"/><rect x="4" y="6" width="1" height="1"/><rect x="5.6" y="6" width="1" height="1"/></g></svg><div class="r" style="left:172.00px;top:465.10px;width:791.00px;height:1.00px;background:#f0f0f0;"></div><div id="t80" class="t" style="left:709.50px;top:443.54px;font-size:7.00px;line-height:9.10px;font-weight:700;color:#1b3a8f;letter-spacing:-0.063px;">Yönet</div><div class="r" style="left:773.00px;top:441.60px;width:51.00px;height:12.20px;background:#1f56e8;border-radius:6.1px;"></div><div id="t81" class="t" style="left:777.00px;top:443.66px;font-size:6.80px;line-height:8.84px;font-weight:400;color:#fff;-webkit-text-stroke:0.10px #fff;">Aktif</div><svg class="r" style="left:814.00px;top:446.10px;" width="5" height="3" viewBox="0 0 5 3"><path d="M0.4 0.4L2.5 2.5L4.6 0.4" fill="none" stroke="#fff" stroke-width="0.7"/></svg><svg class="r" style="left:837.70px;top:443.10px;" width="9" height="9" viewBox="0 0 9 9"><path d="M1 2.5H4.5M1 2.5V8.5H7V5" fill="none" stroke="#555" stroke-width="0.9"/><path d="M3.5 6L8 1.5" stroke="#555" stroke-width="1.2"/></svg><svg class="r" style="left:850.30px;top:443.10px;" width="9" height="9" viewBox="0 0 9 9"><path d="M1 2.5H4.5M1 2.5V8.5H7V5" fill="none" stroke="#8a70f0" stroke-width="0.9"/><path d="M3.5 6L8 1.5" stroke="#8a70f0" stroke-width="1.2"/></svg><svg class="r" style="left:863.90px;top:443.10px;" width="9" height="9" viewBox="0 0 9 9"><rect x="1.4" y="2.6" width="4.4" height="5.9" rx="0.6" fill="none" stroke="#111" stroke-width="0.85"/><path d="M3.4 2.4V1.2H7.6V6.6H5.9" fill="none" stroke="#111" stroke-width="0.85" stroke-linejoin="round"/></svg><svg class="r" style="left:878.50px;top:443.10px;" width="9" height="9" viewBox="0 0 9 9"><circle cx="4.5" cy="4.5" r="3.8" fill="none" stroke="#111" stroke-width="0.9"/><path d="M3.3 3.5C3.3 2.3 5.7 2.3 5.7 3.5C5.7 4.4 4.5 4.4 4.5 5.3" fill="none" stroke="#111" stroke-width="0.8"/><circle cx="4.5" cy="6.6" r="0.5" fill="#111"/></svg><svg class="r" style="left:892.80px;top:443.10px;" width="9" height="9" viewBox="0 0 9 9"><circle cx="3.8" cy="3.8" r="2.8" fill="none" stroke="#333" stroke-width="0.9"/><path d="M5.8 5.8L8.3 8.3" stroke="#333" stroke-width="1"/></svg><svg class="r" style="left:906.50px;top:443.10px;" width="9" height="9" viewBox="0 0 9 9"><path d="M3 5.5C2 4.8 2.2 1 3.9 1C5.6 1 5.8 4.8 4.8 5.5V6.2H6.8V8.3H1V6.2H3Z" fill="none" stroke="#555" stroke-width="0.7" stroke-linejoin="round"/><circle cx="8" cy="4" r="0.7" fill="#555"/></svg><svg class="r" style="left:919.50px;top:443.10px;" width="9" height="9" viewBox="0 0 9 9"><rect x="0.9" y="1.2" width="7.2" height="7.4" rx="0.8" fill="none" stroke="#f03030" stroke-width="0.65" stroke-dasharray="1.1 0.45"/><path d="M0.9 3H8.1" stroke="#f03030" stroke-width="0.5" stroke-dasharray="0.7 0.4"/><path d="M2.6 0.5V1.8M6.4 0.5V1.8" stroke="#f03030" stroke-width="0.6"/><g fill="#ee1c1c"><rect x="2.4" y="4" width="1" height="1"/><rect x="4" y="4" width="1" height="1"/><rect x="5.6" y="4" width="1" height="1"/><rect x="2.4" y="6" width="1" height="1"/><rect x="4" y="6" width="1" height="1"/><rect x="5.6" y="6" width="1" height="1"/></g></svg><svg class="r" style="left:933.50px;top:443.10px;" width="9" height="9" viewBox="0 0 9 9"><rect x="1.5" y="1" width="6" height="7.4" rx="0.4" fill="none" stroke="#555" stroke-width="0.8"/><path d="M1.5 3.2H7.5" stroke="#555" stroke-width="0.7"/><g fill="#555"><rect x="2.5" y="4.1" width="1.4" height="1"/><rect x="5" y="4.1" width="1.4" height="1"/><rect x="2.5" y="6.2" width="1.4" height="1"/><rect x="5" y="6.2" width="1.4" height="1"/></g></svg><svg class="r" style="left:947.10px;top:443.10px;" width="9" height="9" viewBox="0 0 9 9"><rect x="0.9" y="1.2" width="7.2" height="7.4" rx="0.8" fill="none" stroke="#a8a2f2" stroke-width="0.65" stroke-dasharray="1.1 0.45"/><path d="M0.9 3H8.1" stroke="#a8a2f2" stroke-width="0.5" stroke-dasharray="0.7 0.4"/><path d="M2.6 0.5V1.8M6.4 0.5V1.8" stroke="#a8a2f2" stroke-width="0.6"/><g fill="#a8a2f2"><rect x="2.4" y="4" width="1" height="1"/><rect x="4" y="4" width="1" height="1"/><rect x="5.6" y="4" width="1" height="1"/><rect x="2.4" y="6" width="1" height="1"/><rect x="4" y="6" width="1" height="1"/><rect x="5.6" y="6" width="1" height="1"/></g></svg><div class="r" style="left:172.00px;top:465.60px;width:791.00px;height:29.90px;background:linear-gradient(90deg,#f1f1f1,#f6f6f6 60%,#f3f3f3);"></div><div class="r" style="left:172.00px;top:495.00px;width:791.00px;height:1.00px;background:#f0f0f0;"></div><div id="t82" class="t" style="left:709.50px;top:479.44px;font-size:7.00px;line-height:9.10px;font-weight:700;color:#1b3a8f;letter-spacing:-0.063px;">Yönet</div><div class="r" style="left:773.00px;top:477.50px;width:51.00px;height:12.20px;background:#1f56e8;border-radius:6.1px;"></div><div id="t83" class="t" style="left:777.00px;top:479.56px;font-size:6.80px;line-height:8.84px;font-weight:400;color:#fff;-webkit-text-stroke:0.10px #fff;">Aktif</div><svg class="r" style="left:814.00px;top:482.00px;" width="5" height="3" viewBox="0 0 5 3"><path d="M0.4 0.4L2.5 2.5L4.6 0.4" fill="none" stroke="#fff" stroke-width="0.7"/></svg><svg class="r" style="left:838.00px;top:479.00px;" width="9" height="9" viewBox="0 0 9 9"><path d="M1 2.5H4.5M1 2.5V8.5H7V5" fill="none" stroke="#555" stroke-width="0.9"/><path d="M3.5 6L8 1.5" stroke="#555" stroke-width="1.2"/></svg><svg class="r" style="left:863.70px;top:479.00px;" width="9" height="9" viewBox="0 0 9 9"><path d="M1 2.5H4.5M1 2.5V8.5H7V5" fill="none" stroke="#8a70f0" stroke-width="0.9"/><path d="M3.5 6L8 1.5" stroke="#8a70f0" stroke-width="1.2"/></svg><svg class="r" style="left:889.50px;top:479.00px;" width="9" height="9" viewBox="0 0 9 9"><rect x="1.4" y="2.6" width="4.4" height="5.9" rx="0.6" fill="none" stroke="#111" stroke-width="0.85"/><path d="M3.4 2.4V1.2H7.6V6.6H5.9" fill="none" stroke="#111" stroke-width="0.85" stroke-linejoin="round"/></svg><svg class="r" style="left:917.80px;top:479.00px;" width="9" height="9" viewBox="0 0 9 9"><circle cx="4.5" cy="4.5" r="3.8" fill="none" stroke="#111" stroke-width="0.9"/><path d="M3.3 3.5C3.3 2.3 5.7 2.3 5.7 3.5C5.7 4.4 4.5 4.4 4.5 5.3" fill="none" stroke="#111" stroke-width="0.8"/><circle cx="4.5" cy="6.6" r="0.5" fill="#111"/></svg><div class="r" style="left:826.00px;top:203.30px;width:34.00px;height:18.00px;background:#fff;border-radius:4px;box-shadow:0 0 2px rgba(0,0,0,0.08);"></div><svg class="r" style="left:838.50px;top:220.50px;" width="7" height="4" viewBox="0 0 7 4"><path d="M0 0L3.5 3.5L7 0Z" fill="#fff"/></svg><div id="t84" class="t" style="left:829.50px;top:208.01px;font-size:7.40px;line-height:9.62px;font-weight:400;color:#222;letter-spacing:-0.104px;-webkit-text-stroke:0.10px #222;">Düzenle</div><div class="r" style="left:102.50px;top:398.00px;width:587.50px;height:205.50px;background:#f7f6fd;border-radius:6px;"></div><div class="r" style="left:108.10px;top:402.90px;width:133.50px;height:193.50px;background:#fff;border-radius:6px;"></div><div class="r" style="left:108.10px;top:402.9px;width:133.5px;height:104px;border-radius:6px 6px 0 0;overflow:hidden"><svg class="r" style="left:0.00px;top:0.00px;position:absolute" width="133.5" height="104" viewBox="22 22 923 723" preserveAspectRatio="none"><defs><filter id="bcard108" x="-5%" y="-5%" width="110%" height="110%"><feGaussianBlur stdDeviation="9"/></filter><clipPath id="ccard108"><rect x="22" y="22" width="923" height="723"/></clipPath></defs><g clip-path="url(#ccard108)"><g filter="url(#bcard108)"><rect x="0" y="0" width="972" height="764" fill="#8c9a86"/><rect x="0" y="0" width="972" height="320" fill="#8aa468"/><ellipse cx="180" cy="80" rx="180" ry="80" fill="#98b070"/><ellipse cx="420" cy="120" rx="120" ry="90" fill="#86a660"/><ellipse cx="700" cy="90" rx="220" ry="100" fill="#a8ac98"/><ellipse cx="880" cy="200" rx="100" ry="120" fill="#90b070"/><ellipse cx="660" cy="230" rx="90" ry="90" fill="#6e9050"/><polygon points="100,160 200,140 280,180 280,260 100,260" fill="#9e8466"/><rect x="110" y="190" width="50" height="60" fill="#4e4a40"/><rect x="0" y="200" width="60" height="80" fill="#7a6a50"/><polygon points="0,270 300,235 460,225 400,320 0,370" fill="#8c8476"/><polygon points="420,225 560,225 972,450 972,764 100,764 300,560 400,450" fill="#8e9e8c"/><polygon points="480,300 600,300 700,420 550,520 400,500" fill="#7e9484"/><polygon points="0,320 420,300 400,450 270,560 0,640" fill="#3a2828"/><polygon points="0,340 400,320 400,332 0,354" fill="#6a4444"/><polygon points="0,390 360,374 360,386 0,404" fill="#6a4444"/><polygon points="0,440 320,428 320,440 0,454" fill="#6a4444"/><polygon points="0,490 280,482 280,494 0,504" fill="#6a4444"/><polygon points="0,540 240,536 240,548 0,554" fill="#6a4444"/><polygon points="0,590 200,590 200,602 0,604" fill="#6a4444"/><polygon points="570,280 972,250 972,450 700,390" fill="#6e9c48"/><polygon points="700,380 972,330 972,450" fill="#5a8a3a"/><rect x="470" y="350" width="150" height="45" fill="#c4aca8"/><rect x="600" y="395" width="200" height="70" fill="#b8a0a2"/><rect x="670" y="490" width="250" height="130" fill="#cabaaa"/><rect x="700" y="510" width="190" height="70" fill="#8a6a78"/><rect x="310" y="530" width="380" height="40" fill="#c4bcac"/><rect x="380" y="425" width="230" height="25" fill="#c8c0b0"/><ellipse cx="560" cy="700" rx="220" ry="55" fill="#d0dad6"/><ellipse cx="330" cy="640" rx="60" ry="40" fill="#c8d4d0"/><polygon points="0,600 320,480 300,540 120,764 0,764" fill="#86847c"/><polygon points="0,700 100,640 60,764 0,764" fill="#5a5a54"/></g></g></svg></div><div id="t85" class="t" style="left:118.40px;top:517.80px;font-size:6.20px;line-height:8.06px;font-weight:400;color:#6d87cf;letter-spacing:-0.329px;-webkit-text-stroke:0.10px #6d87cf;">Duration: 1 Day</div><div id="t86" class="t" style="left:118.40px;top:528.67px;font-size:6.60px;line-height:8.58px;font-weight:700;color:#11309a;letter-spacing:-0.188px;">Green Tour Cappadocia</div><svg class="r" style="left:118.10px;top:540.80px;" width="5.8" height="5.8" viewBox="0 0 5.8 5.8"><circle cx="2.9" cy="2.9" r="2.8" fill="#2f6a2f"/><path d="M1.5 3L2.5 4L4.3 2" fill="none" stroke="#fff" stroke-width="0.7"/></svg><div id="t87" class="t" style="left:124.90px;top:540.67px;font-size:5.40px;line-height:7.02px;font-weight:700;color:#2e5a2e;letter-spacing:-0.096px;">Discount up to %40</div><svg class="r" style="left:178.60px;top:540.80px;" width="5.8" height="5.8" viewBox="0 0 5.8 5.8"><circle cx="2.9" cy="2.9" r="2.3" fill="none" stroke="#c81414" stroke-width="1.1"/></svg><div id="t88" class="t" style="left:185.20px;top:540.61px;font-size:5.50px;line-height:7.15px;font-weight:700;color:#c81414;letter-spacing:-0.137px;">Likely to Sell Out</div><div id="t89" class="t" style="left:211.90px;top:566.84px;font-size:5.80px;line-height:7.54px;font-weight:400;color:#6d87cf;letter-spacing:0.043px;-webkit-text-stroke:0.10px #6d87cf;"><s>75.00 €</s></div><div id="t90" class="t" style="left:156.20px;top:579.98px;font-size:5.20px;line-height:6.76px;font-weight:400;color:#6d87cf;letter-spacing:-0.057px;-webkit-text-stroke:0.10px #6d87cf;">Starting Price</div><div id="t91" class="t" style="left:190.90px;top:573.14px;font-size:12.00px;line-height:15.60px;font-weight:700;color:#1f47c8;letter-spacing:0.092px;">45.00 €</div><div class="r" style="left:255.10px;top:402.90px;width:133.50px;height:193.50px;background:#fff;border-radius:6px;"></div><div class="r" style="left:255.10px;top:402.9px;width:133.5px;height:104px;border-radius:6px 6px 0 0;overflow:hidden"><svg class="r" style="left:0.00px;top:0.00px;position:absolute" width="133.5" height="104" viewBox="22 22 923 723" preserveAspectRatio="none"><defs><filter id="bcard255" x="-5%" y="-5%" width="110%" height="110%"><feGaussianBlur stdDeviation="9"/></filter><clipPath id="ccard255"><rect x="22" y="22" width="923" height="723"/></clipPath></defs><g clip-path="url(#ccard255)"><g filter="url(#bcard255)"><defs><linearGradient id="gcard255" x1="0" y1="0" x2="0" y2="1"><stop offset="0" stop-color="#4e7ec4"/><stop offset="0.3" stop-color="#86a8d8"/><stop offset="0.5" stop-color="#c8d2dc"/></linearGradient></defs><rect x="0" y="0" width="972" height="400" fill="url(#gcard255)"/><ellipse cx="220" cy="170" rx="200" ry="35" fill="#c4d2e6"/><ellipse cx="640" cy="115" rx="140" ry="28" fill="#c8d6ea"/><ellipse cx="500" cy="260" rx="300" ry="30" fill="#d4dae0"/><rect x="0" y="325" width="972" height="60" fill="#c8b69a"/><polygon points="600,330 972,320 972,360 600,360" fill="#9aa0a8"/><polygon points="0,360 972,370 972,764 0,764" fill="#a08c6a"/><polygon points="0,560 972,540 972,764 0,764" fill="#8a7656"/><ellipse cx="500" cy="440" rx="120" ry="40" fill="#b09c7c"/><ellipse cx="80" cy="410" rx="55" ry="50" fill="#b0a08a"/><ellipse cx="750" cy="400" rx="45" ry="48" fill="#b4b6b6"/><ellipse cx="850" cy="400" rx="50" ry="44" fill="#c0c2c0"/><ellipse cx="580" cy="450" rx="50" ry="25" fill="#8a6a5a"/><ellipse cx="850" cy="530" rx="110" ry="85" fill="#8e7464"/><rect x="100" y="420" width="40" height="80" fill="#3a3a40"/><rect x="185" y="310" width="310" height="340" rx="20" fill="#3a4838"/><rect x="240" y="300" width="200" height="30" fill="#8a6a40"/><rect x="250" y="360" width="190" height="75" fill="#6c7a6c"/><rect x="195" y="490" width="295" height="70" fill="#24241f"/><circle cx="250" cy="520" r="20" fill="#e0e0d0"/><circle cx="440" cy="520" r="20" fill="#e0e0d0"/><rect x="260" y="580" width="180" height="40" fill="#b8a040"/><rect x="180" y="580" width="60" height="80" fill="#1e1e1c"/><rect x="450" y="580" width="50" height="80" fill="#1e1e1c"/><ellipse cx="365" cy="450" rx="35" ry="85" fill="#5e3424"/><ellipse cx="395" cy="195" rx="26" ry="30" fill="#5a4a6a"/><ellipse cx="535" cy="205" rx="22" ry="26" fill="#c0a068"/><ellipse cx="715" cy="220" rx="14" ry="16" fill="#404060"/><ellipse cx="800" cy="205" rx="20" ry="22" fill="#3c4870"/><ellipse cx="525" cy="285" rx="16" ry="18" fill="#b89c70"/><ellipse cx="490" cy="100" rx="14" ry="15" fill="#a89070"/><ellipse cx="453" cy="180" rx="9" ry="10" fill="#905040"/><ellipse cx="567" cy="95" rx="8" ry="9" fill="#905040"/><ellipse cx="677" cy="205" rx="8" ry="9" fill="#806050"/><ellipse cx="863" cy="192" rx="8" ry="9" fill="#806050"/></g></g></svg></div><div class="r" style="left:357.80px;top:407.80px;width:25.70px;height:10.00px;background:#fff;border-radius:5px;"></div><svg class="r" style="left:360.90px;top:409.80px;" width="6" height="6" viewBox="0 0 6 6"><path d="M3 0.3L3.8 2.2L5.8 2.3L4.2 3.6L4.8 5.6L3 4.4L1.2 5.6L1.8 3.6L0.2 2.3L2.2 2.2Z" fill="#f2a51c"/></svg><div id="t92" class="t" style="left:368.70px;top:409.55px;font-size:5.60px;line-height:7.28px;font-weight:700;color:#1b2f90;letter-spacing:0.036px;">5.00</div><div id="t93" class="t" style="left:265.40px;top:517.80px;font-size:6.20px;line-height:8.06px;font-weight:400;color:#6d87cf;letter-spacing:-0.182px;-webkit-text-stroke:0.10px #6d87cf;">Duration: 120 Minute</div><div id="t94" class="t" style="left:265.40px;top:528.67px;font-size:6.60px;line-height:8.58px;font-weight:700;color:#11309a;letter-spacing:-0.153px;">Jeep Safari Cappadocia</div><svg class="r" style="left:265.10px;top:540.80px;" width="5.8" height="5.8" viewBox="0 0 5.8 5.8"><circle cx="2.9" cy="2.9" r="2.8" fill="#2f6a2f"/><path d="M1.5 3L2.5 4L4.3 2" fill="none" stroke="#fff" stroke-width="0.7"/></svg><div id="t95" class="t" style="left:271.90px;top:540.67px;font-size:5.40px;line-height:7.02px;font-weight:700;color:#2e5a2e;letter-spacing:-0.108px;">Discount up to %55</div><svg class="r" style="left:325.60px;top:540.80px;" width="5.8" height="5.8" viewBox="0 0 5.8 5.8"><circle cx="2.9" cy="2.9" r="2.3" fill="none" stroke="#c81414" stroke-width="1.1"/></svg><div id="t96" class="t" style="left:332.20px;top:540.61px;font-size:5.50px;line-height:7.15px;font-weight:700;color:#c81414;letter-spacing:-0.178px;">Likely to Sell Out</div><div id="t97" class="t" style="left:356.00px;top:566.84px;font-size:5.80px;line-height:7.54px;font-weight:400;color:#6d87cf;letter-spacing:-0.011px;-webkit-text-stroke:0.10px #6d87cf;"><s>100.00 €</s></div><div id="t98" class="t" style="left:303.20px;top:579.98px;font-size:5.20px;line-height:6.76px;font-weight:400;color:#6d87cf;letter-spacing:-0.057px;-webkit-text-stroke:0.10px #6d87cf;">Starting Price</div><div id="t99" class="t" style="left:337.90px;top:573.14px;font-size:12.00px;line-height:15.60px;font-weight:700;color:#1f47c8;letter-spacing:0.092px;">45.00 €</div><div class="r" style="left:401.10px;top:402.90px;width:133.50px;height:193.50px;background:#fff;border-radius:6px;"></div><div class="r" style="left:401.10px;top:402.9px;width:133.5px;height:104px;border-radius:6px 6px 0 0;overflow:hidden"><svg class="r" style="left:0.00px;top:0.00px;position:absolute" width="133.5" height="104" viewBox="22 22 923 723" preserveAspectRatio="none"><defs><filter id="bcard401" x="-5%" y="-5%" width="110%" height="110%"><feGaussianBlur stdDeviation="9"/></filter><clipPath id="ccard401"><rect x="22" y="22" width="923" height="723"/></clipPath></defs><g clip-path="url(#ccard401)"><g filter="url(#bcard401)"><rect x="0" y="0" width="972" height="764" fill="#cfc3ad"/><rect x="0" y="0" width="440" height="330" fill="#9c8670"/><rect x="100" y="40" width="300" height="160" fill="#b8a68c"/><ellipse cx="240" cy="80" rx="30" ry="20" fill="#f0e8d8"/><polygon points="130,170 240,110 280,190 170,240" fill="#4a3a30"/><rect x="440" y="0" width="300" height="100" fill="#7a7a5a"/><rect x="430" y="100" width="320" height="200" fill="#d8d0c0"/><rect x="740" y="0" width="232" height="300" fill="#b49c7c"/><ellipse cx="540" cy="230" rx="62" ry="100" fill="#3a2e26"/><rect x="0" y="190" width="972" height="150" fill="#4a3c32" opacity="0.8"/><polygon points="0,340 972,320 972,764 0,764" fill="#d4c8b2"/><ellipse cx="280" cy="700" rx="180" ry="45" fill="#8a7a68"/><ellipse cx="80" cy="610" rx="90" ry="45" fill="#9a8a76"/><ellipse cx="870" cy="660" rx="110" ry="55" fill="#968672"/><ellipse cx="450" cy="560" rx="90" ry="30" fill="#c0b4a0"/><rect x="30" y="190" width="55" height="210" fill="#2a2624"/><rect x="880" y="240" width="92" height="120" fill="#d8a8a8"/><rect x="900" y="360" width="50" height="80" fill="#c8b890"/><rect x="85" y="270" width="70" height="80" fill="#e0b070"/><rect x="95" y="340" width="70" height="110" fill="#e8e4e0"/><rect x="85" y="440" width="80" height="70" fill="#c03030"/><rect x="95" y="500" width="55" height="80" fill="#9a3aa8"/><ellipse cx="240" cy="300" rx="35" ry="35" fill="#6a4a30"/><polygon points="200,340 300,330 420,480 400,500 320,440 330,520 250,520 240,420 180,430" fill="#9a9a9a"/><polygon points="235,345 300,340 330,520 250,520" fill="#2e2c2c"/><polygon points="250,500 330,500 420,690 380,720 300,600 260,660 210,660" fill="#3a3836"/><polygon points="340,320 400,265 450,265 500,340 480,350 450,320 450,440 400,440 400,320 360,340" fill="#e8e8e8"/><rect x="395" y="265" width="55" height="95" fill="#3a4a70"/><rect x="400" y="360" width="60" height="100" fill="#3a3a3a"/><rect x="540" y="250" width="70" height="170" fill="#c04848"/><rect x="510" y="290" width="40" height="50" fill="#e0e0e0"/><rect x="650" y="250" width="65" height="210" fill="#464646"/><rect x="690" y="290" width="30" height="100" fill="#e0e0e0"/><rect x="710" y="290" width="75" height="190" fill="#c0405a"/><rect x="730" y="470" width="50" height="80" fill="#b060b0"/><ellipse cx="850" cy="290" rx="30" ry="30" fill="#5a5048"/><rect x="790" y="320" width="90" height="160" fill="#8a8a8a"/><rect x="800" y="330" width="60" height="140" fill="#2e2e2e"/><polygon points="790,470 870,470 860,600 820,680 780,660 810,580" fill="#3a3838"/><polygon points="460,500 560,440 620,400 680,460 750,480 740,510 680,500 680,640 540,640 560,480 470,520" fill="#6a6aa8"/><rect x="575" y="420" width="90" height="120" fill="#7a3a58"/><polygon points="545,540 690,540 690,650 540,650" fill="#b84030"/><rect x="545" y="640" width="115" height="70" fill="#8a38b8"/><ellipse cx="620" cy="400" rx="28" ry="35" fill="#4a3a6a"/></g></g></svg></div><div class="r" style="left:503.80px;top:407.80px;width:25.70px;height:10.00px;background:#fff;border-radius:5px;"></div><svg class="r" style="left:506.90px;top:409.80px;" width="6" height="6" viewBox="0 0 6 6"><path d="M3 0.3L3.8 2.2L5.8 2.3L4.2 3.6L4.8 5.6L3 4.4L1.2 5.6L1.8 3.6L0.2 2.3L2.2 2.2Z" fill="#f2a51c"/></svg><div id="t100" class="t" style="left:514.70px;top:409.55px;font-size:5.60px;line-height:7.28px;font-weight:700;color:#1b2f90;letter-spacing:0.036px;">5.00</div><div id="t101" class="t" style="left:411.40px;top:517.80px;font-size:6.20px;line-height:8.06px;font-weight:400;color:#6d87cf;letter-spacing:-0.294px;-webkit-text-stroke:0.10px #6d87cf;">Duration: 3 Hour</div><div id="t102" class="t" style="left:411.40px;top:528.67px;font-size:6.60px;line-height:8.58px;font-weight:700;color:#11309a;letter-spacing:-0.183px;">Turkish Night Show Cappadocia</div><svg class="r" style="left:411.10px;top:540.80px;" width="5.8" height="5.8" viewBox="0 0 5.8 5.8"><circle cx="2.9" cy="2.9" r="2.8" fill="#2f6a2f"/><path d="M1.5 3L2.5 4L4.3 2" fill="none" stroke="#fff" stroke-width="0.7"/></svg><div id="t103" class="t" style="left:417.90px;top:540.67px;font-size:5.40px;line-height:7.02px;font-weight:700;color:#2e5a2e;letter-spacing:-0.155px;">Discount up to %14</div><svg class="r" style="left:470.60px;top:540.80px;" width="5.5" height="5.8" viewBox="0 0 5.5 5.8"><path d="M0.5 0.5H5V2.2C5 3.5 3.8 4 2.75 4C1.7 4 0.5 3.5 0.5 2.2Z M2.75 4V5.3M1.5 5.3H4" fill="#1b3a9a" stroke="#1b3a9a" stroke-width="0.5"/></svg><div id="t104" class="t" style="left:476.30px;top:540.61px;font-size:5.50px;line-height:7.15px;font-weight:700;color:#1b3a9a;letter-spacing:-0.104px;">Best Seller</div><div id="t105" class="t" style="left:504.90px;top:566.84px;font-size:5.80px;line-height:7.54px;font-weight:400;color:#6d87cf;letter-spacing:0.043px;-webkit-text-stroke:0.10px #6d87cf;"><s>70.00 €</s></div><div id="t106" class="t" style="left:449.20px;top:579.98px;font-size:5.20px;line-height:6.76px;font-weight:400;color:#6d87cf;letter-spacing:-0.057px;-webkit-text-stroke:0.10px #6d87cf;">Starting Price</div><div id="t107" class="t" style="left:483.90px;top:573.14px;font-size:12.00px;line-height:15.60px;font-weight:700;color:#1f47c8;letter-spacing:0.092px;">60.00 €</div><div class="r" style="left:547.70px;top:402.90px;width:133.50px;height:193.50px;background:#fff;border-radius:6px;"></div><div class="r" style="left:547.70px;top:402.9px;width:133.5px;height:104px;border-radius:6px 6px 0 0;overflow:hidden"><svg class="r" style="left:0.00px;top:0.00px;position:absolute" width="133.5" height="104" viewBox="22 22 923 723" preserveAspectRatio="none"><defs><filter id="bcard547" x="-5%" y="-5%" width="110%" height="110%"><feGaussianBlur stdDeviation="9"/></filter><clipPath id="ccard547"><rect x="22" y="22" width="923" height="723"/></clipPath></defs><g clip-path="url(#ccard547)"><g filter="url(#bcard547)"><defs><linearGradient id="gcard547" x1="0" y1="0" x2="0" y2="1"><stop offset="0" stop-color="#2e6488"/><stop offset="0.18" stop-color="#7a9aa8"/><stop offset="0.35" stop-color="#d8c898"/><stop offset="0.5" stop-color="#e0c088"/></linearGradient></defs><rect x="0" y="0" width="972" height="764" fill="url(#gcard547)"/><ellipse cx="480" cy="80" rx="280" ry="35" fill="#c0ccd0"/><ellipse cx="300" cy="110" rx="120" ry="20" fill="#e0e4e0"/><polygon points="330,330 400,190 430,160 470,170 520,260 530,330" fill="#6a5c48"/><polygon points="550,290 590,170 640,160 680,260" fill="#7c6c56"/><polygon points="680,270 700,180 740,175 750,270" fill="#86765e"/><polygon points="770,310 790,170 840,160 880,320" fill="#74644e"/><polygon points="260,330 290,250 330,330" fill="#6a604e"/><ellipse cx="660" cy="320" rx="220" ry="55" fill="#dccca8"/><polygon points="150,390 972,370 972,764 150,764" fill="#b09c74"/><polygon points="300,430 600,420 972,540 972,764 380,764" fill="#c2b298"/><polygon points="0,0 110,0 160,300 170,764 0,764" fill="#b49452"/><polygon points="0,300 90,250 130,500 60,764 0,764" fill="#c4a868"/><polygon points="150,500 370,600 380,764 150,764" fill="#a48c5c"/><rect x="175" y="340" width="125" height="100" fill="#5a2a22"/><rect x="200" y="310" width="60" height="40" fill="#3a2a2a"/><ellipse cx="370" cy="360" rx="35" ry="45" fill="#e8e0d0"/><rect x="640" y="310" width="120" height="140" fill="#d898b0"/><rect x="600" y="330" width="50" height="130" fill="#222"/><rect x="640" y="440" width="60" height="80" fill="#34406a"/><ellipse cx="645" cy="292" rx="22" ry="16" fill="#e8f0f8"/><ellipse cx="700" cy="296" rx="26" ry="18" fill="#e8f0f8"/><polygon points="545,450 850,440 900,560 880,660 560,660" fill="#2a2822"/><ellipse cx="730" cy="530" rx="35" ry="15" fill="#e0d8b0"/><ellipse cx="580" cy="580" rx="35" ry="60" fill="#1c1a16"/><ellipse cx="670" cy="610" rx="45" ry="55" fill="#1c1a16"/><ellipse cx="860" cy="600" rx="40" ry="60" fill="#1c1a16"/><ellipse cx="910" cy="440" rx="60" ry="100" fill="#a89068"/></g></g></svg></div><div class="r" style="left:650.40px;top:407.80px;width:25.70px;height:10.00px;background:#fff;border-radius:5px;"></div><svg class="r" style="left:653.50px;top:409.80px;" width="6" height="6" viewBox="0 0 6 6"><path d="M3 0.3L3.8 2.2L5.8 2.3L4.2 3.6L4.8 5.6L3 4.4L1.2 5.6L1.8 3.6L0.2 2.3L2.2 2.2Z" fill="#f2a51c"/></svg><div id="t108" class="t" style="left:661.30px;top:409.55px;font-size:5.60px;line-height:7.28px;font-weight:700;color:#1b2f90;letter-spacing:0.036px;">5.00</div><div id="t109" class="t" style="left:558.00px;top:517.80px;font-size:6.20px;line-height:8.06px;font-weight:400;color:#6d87cf;letter-spacing:-0.294px;-webkit-text-stroke:0.10px #6d87cf;">Duration: 2 Hour</div><div id="t110" class="t" style="left:558.00px;top:528.22px;font-size:7.20px;line-height:9.36px;font-weight:700;color:#11309a;">Su</div><div id="t111" class="t" style="left:558.00px;top:535.62px;font-size:7.20px;line-height:9.36px;font-weight:700;color:#11309a;">of</div><svg class="r" style="left:552.20px;top:548.50px;" width="5.5" height="5.5" viewBox="0 0 5.5 5.5"><circle cx="2.75" cy="2.75" r="2.6" fill="#2f6a2f"/></svg><div id="t112" class="t" style="left:558.00px;top:517.80px;font-size:6.20px;line-height:8.06px;font-weight:400;color:#6d87cf;-webkit-text-stroke:0.10px #6d87cf;">Du</div><div class="r" style="left:564.00px;top:496.30px;width:548.00px;height:227.00px;background:#fff;border-radius:6px;"></div><div class="r" style="left:571.40px;top:504.00px;width:532.00px;height:60.80px;border:1px solid #ececec;border-radius:3px;box-sizing:border-box;"></div><div class="r" style="left:585.50px;top:527.40px;width:14.00px;height:14.00px;border:1px solid #8a8a8a;border-radius:50%;box-sizing:border-box;"></div><div id="t126" class="t" style="left:613.50px;top:519.52px;font-size:11.00px;line-height:14.30px;font-weight:700;color:#222;letter-spacing:0.028px;">Kişi Başı (Paylaşımlı turlar ve etkinlikler için kullanılır)</div><div id="t127" class="t" style="left:613.50px;top:538.60px;font-size:10.00px;line-height:13.00px;font-weight:400;color:#333;letter-spacing:-0.015px;-webkit-text-stroke:0.10px #333;">Yetişkin, çocuk, bebek gibi seçeneklerde kişi başına fiyatlandırma.</div><div class="r" style="left:571.40px;top:579.50px;width:532.00px;height:60.50px;border:1px solid #ececec;border-radius:3px;box-sizing:border-box;"></div><div class="r" style="left:585.50px;top:602.75px;width:14.00px;height:14.00px;border:1px solid #8a8a8a;border-radius:50%;box-sizing:border-box;"></div><div id="t128" class="t" style="left:613.50px;top:594.87px;font-size:11.00px;line-height:14.30px;font-weight:700;color:#222;letter-spacing:0.076px;">Grup Fiyatlandırma (Özel turlar için kullanılır)</div><div id="t129" class="t" style="left:613.50px;top:613.95px;font-size:10.00px;line-height:13.00px;font-weight:400;color:#333;letter-spacing:-0.055px;-webkit-text-stroke:0.10px #333;">Rezervasyon başına maksimum kişi belirleyip, belirlediğiniz kişiye kadar</div><div class="r" style="left:570.60px;top:654.50px;width:532.90px;height:61.30px;border:1px solid #3c5cc4;border-radius:3px;box-sizing:border-box;"></div><div class="r" style="left:585.80px;top:678.15px;width:14.00px;height:14.00px;background:#1a3a9c;border-radius:50%;"></div><div id="t130" class="t" style="left:613.50px;top:670.27px;font-size:11.00px;line-height:14.30px;font-weight:700;color:#222;letter-spacing:0.083px;">Konaklamalı Fiyatlandırma (Araç bazlı birden fazla günlü turlar için kullanılır)</div><div id="t131" class="t" style="left:613.50px;top:689.35px;font-size:10.00px;line-height:13.00px;font-weight:400;color:#333;letter-spacing:-0.057px;-webkit-text-stroke:0.10px #333;">Oda, odada kişi başı, single ve double, yanlarında çocuklar ile fiyatlandırma.</div><div class="r" style="left:928.60px;top:252.00px;width:191.00px;height:387.50px;background:#ececec;border-radius:5px;box-shadow:-6px 0 14px rgba(0,0,0,0.07), 0 5px 10px rgba(0,0,0,0.07);"></div><div class="r" style="left:933.00px;top:256.40px;width:180.70px;height:377.40px;background:#fff;border-radius:4px;"></div><div id="t113" class="t" style="left:947.90px;top:272.40px;font-size:10.00px;line-height:13.00px;font-weight:700;color:#262626;letter-spacing:-0.064px;">Tur içeriği % 6 Tamamlandı</div><div class="r" style="left:947.50px;top:292.20px;width:152.20px;height:10.00px;background:#f0f0f0;border-radius:5px;"></div><div class="r" style="left:947.50px;top:292.20px;width:9.50px;height:10.00px;background:#1a3591;border-radius:50%;"></div><div class="r" style="left:933.00px;top:316.00px;width:180.70px;height:1.00px;background:#f0f0f0;"></div><div class="r" style="left:947.50px;top:331.60px;width:152.20px;height:22.00px;background:#3b3b3b;border-radius:3px;"></div><div id="t114" class="t" style="left:954.90px;top:337.60px;font-size:10.00px;line-height:13.00px;font-weight:700;color:#fff;letter-spacing:0.017px;">Tur Detayları</div><div id="t115" class="t" style="left:961.50px;top:369.43px;font-size:10.30px;line-height:13.39px;font-weight:700;color:#333;letter-spacing:-0.246px;">Başlık ve tür</div><div id="t116" class="t" style="left:961.50px;top:389.83px;font-size:10.30px;line-height:13.39px;font-weight:400;color:#333;letter-spacing:0.106px;-webkit-text-stroke:0.10px #333;">Kategori</div><div id="t117" class="t" style="left:961.50px;top:410.43px;font-size:10.30px;line-height:13.39px;font-weight:400;color:#333;letter-spacing:-0.162px;-webkit-text-stroke:0.10px #333;">Tur Programı</div><div id="t118" class="t" style="left:961.50px;top:431.03px;font-size:10.30px;line-height:13.39px;font-weight:400;color:#333;letter-spacing:-0.009px;-webkit-text-stroke:0.10px #333;">Tur detayı</div><div id="t119" class="t" style="left:961.50px;top:451.63px;font-size:10.30px;line-height:13.39px;font-weight:400;color:#333;letter-spacing:-0.020px;-webkit-text-stroke:0.10px #333;">Fotoğraf / Video</div><div id="t120" class="t" style="left:961.50px;top:472.13px;font-size:10.30px;line-height:13.39px;font-weight:400;color:#333;letter-spacing:-0.079px;-webkit-text-stroke:0.10px #333;">Dahil olanlar</div><div id="t121" class="t" style="left:961.50px;top:492.63px;font-size:10.30px;line-height:13.39px;font-weight:400;color:#333;letter-spacing:-0.038px;-webkit-text-stroke:0.10px #333;">Bilinmesi gerekenler</div><div id="t122" class="t" style="left:961.50px;top:513.23px;font-size:10.30px;line-height:13.39px;font-weight:400;color:#333;letter-spacing:-0.057px;-webkit-text-stroke:0.10px #333;">Yanında ne getirmeli</div><div id="t123" class="t" style="left:961.50px;top:534.23px;font-size:10.30px;line-height:13.39px;font-weight:400;color:#333;letter-spacing:-0.135px;-webkit-text-stroke:0.10px #333;">Buluşma ve alış noktaları</div><div class="r" style="left:947.20px;top:560.50px;width:152.60px;height:22.50px;background:#fff;border-radius:3px;box-shadow:0 1px 5px rgba(0,0,0,0.09);"></div><div id="t124" class="t" style="left:954.70px;top:566.62px;font-size:9.80px;line-height:12.74px;font-weight:700;color:#2a2a2a;letter-spacing:0.154px;">Müsaitlik / Fiyatlandırma</div><div class="r" style="left:947.20px;top:590.30px;width:152.60px;height:22.50px;background:#fff;border-radius:3px;box-shadow:0 1px 5px rgba(0,0,0,0.09);"></div><div id="t125" class="t" style="left:954.70px;top:596.42px;font-size:9.80px;line-height:12.74px;font-weight:700;color:#2a2a2a;letter-spacing:-0.010px;">Rezervasyon Bilgileri</div>
</body></html>
